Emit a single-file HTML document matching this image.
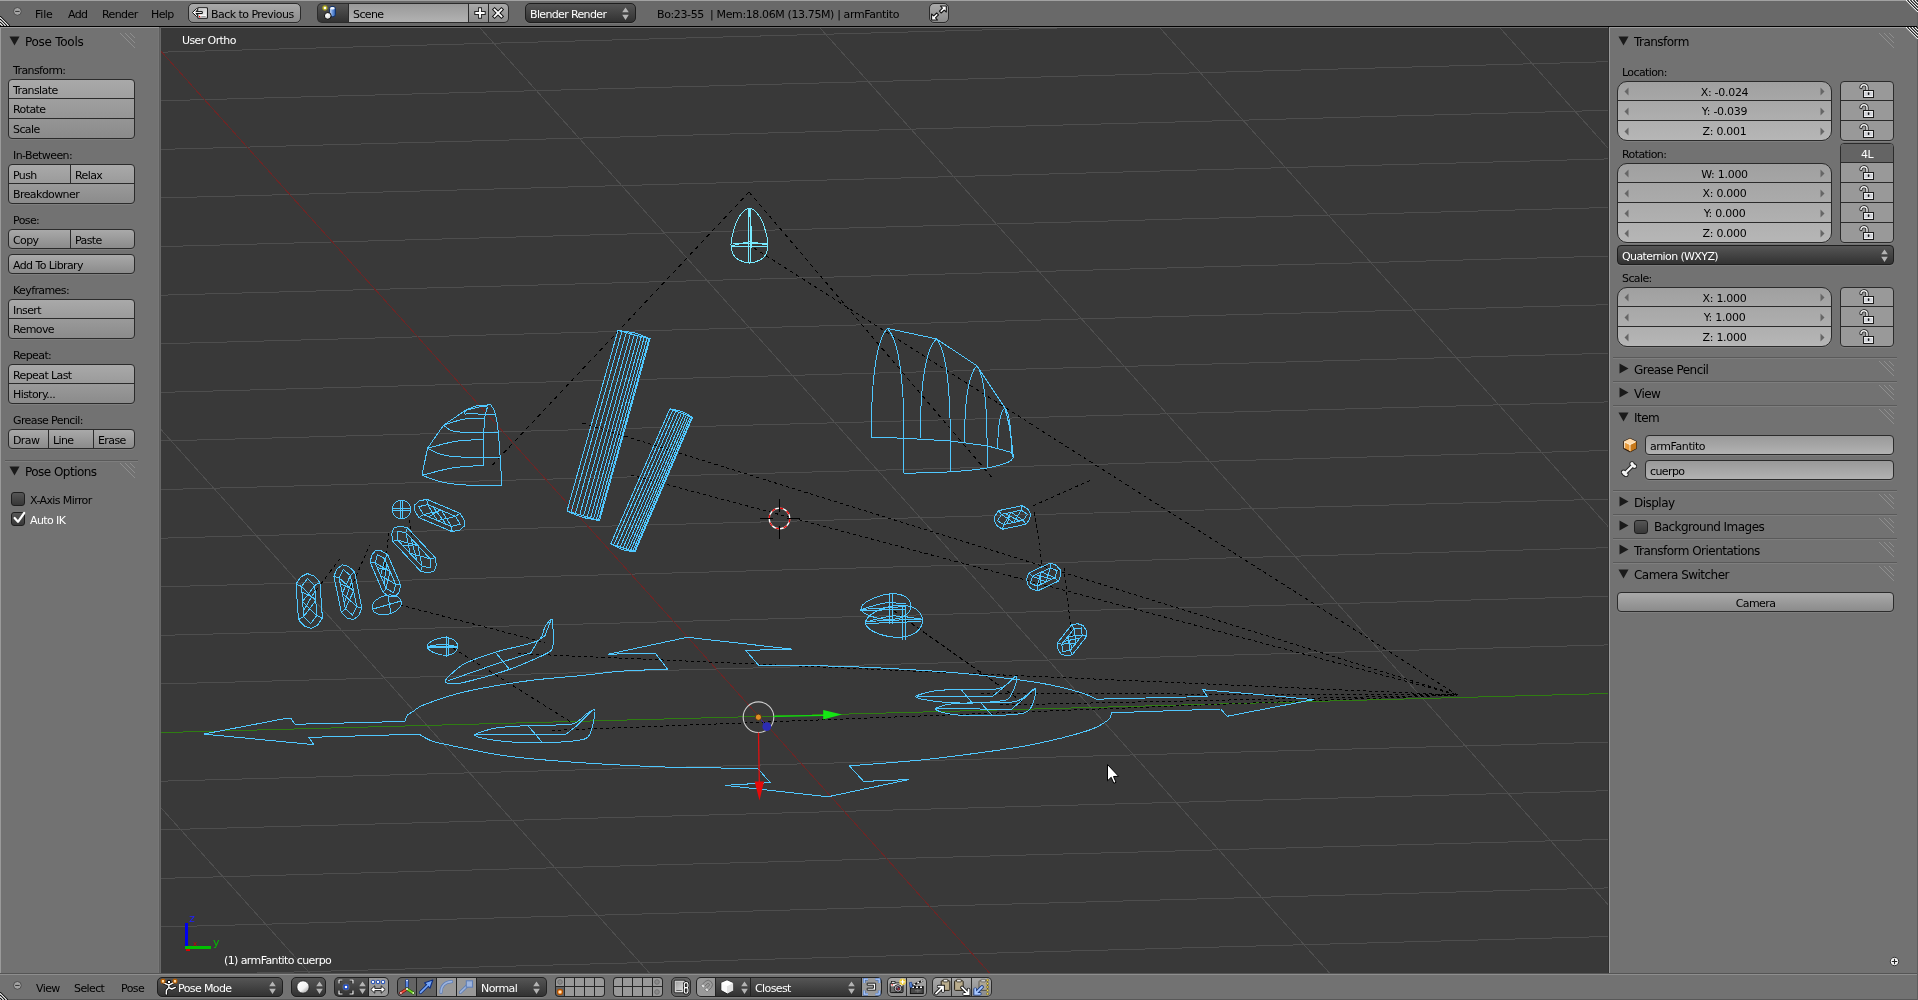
<!DOCTYPE html>
<html><head><meta charset="utf-8"><title>Blender</title>
<style>
html,body{margin:0;padding:0;}
body{width:1918px;height:1000px;position:relative;overflow:hidden;background:#727272;font-family:"DejaVu Sans","Liberation Sans",sans-serif;font-size:11px;line-height:14px;}
body div,body span,body svg{position:absolute;box-sizing:border-box;}
.t{white-space:pre;line-height:14px;will-change:transform;}

.hdr{background:#696969;}
.pan{background:#727272;}
.tool{background:linear-gradient(#a9a9a9,#8b8b8b);border:1px solid #2b2b2b;box-shadow:0 1px 0 rgba(255,255,255,.09);}
.num{background:linear-gradient(#a0a0a0,#b6b6b6);border:1px solid #2b2b2b;box-shadow:0 1px 0 rgba(255,255,255,.09);}
.tog{background:#999;border:1px solid #2b2b2b;box-shadow:0 1px 0 rgba(255,255,255,.09);}
.togsel{background:#646464;border:1px solid #2b2b2b;}
.txtf{background:linear-gradient(#999,#b2b2b2);border:1px solid #2b2b2b;box-shadow:0 1px 0 rgba(255,255,255,.09);}
.menu{background:linear-gradient(#555,#323232);border:1px solid #1e1e1e;box-shadow:0 1px 0 rgba(255,255,255,.09);}
.opt{background:linear-gradient(#555,#373737);border:1px solid #1e1e1e;border-radius:3px;}
.sep{background:#2b2b2b;}
.togc{background:#999;}
.togs{background:#646464;}

</style></head><body>
<div class="hdr" style="left:0px;top:0px;width:1918px;height:27px;"></div>
<div class="" style="left:0px;top:0px;width:1918px;height:1px;background:#a2a2a2;"></div>
<div class="" style="left:0px;top:26px;width:1918px;height:1px;background:#000;"></div>
<div class="pan" style="left:0px;top:27px;width:161px;height:947px;"></div>
<div class="" style="left:0px;top:27px;width:159px;height:1px;background:#9c9c9c;"></div>
<div class="" style="left:0px;top:27px;width:1px;height:947px;background:#9a9a9a;"></div>
<div class="" style="left:158px;top:28px;width:1px;height:946px;background:#777;"></div>
<div class="" style="left:159px;top:27px;width:1px;height:947px;background:#5c5c5c;"></div>
<div class="" style="left:160px;top:27px;width:1px;height:947px;background:#676767;"></div>
<div class="pan" style="left:1608px;top:27px;width:310px;height:947px;"></div>
<div class="" style="left:1608px;top:27px;width:1px;height:947px;background:#303030;"></div>
<div class="" style="left:1609px;top:27px;width:1px;height:947px;background:#9a9a9a;"></div>
<div class="" style="left:1609px;top:27px;width:309px;height:1px;background:#9c9c9c;"></div>
<div class="pan" style="left:0px;top:974px;width:1918px;height:26px;"></div>
<div class="" style="left:0px;top:973px;width:1918px;height:1px;background:#555;"></div>
<div class="" style="left:0px;top:974px;width:1918px;height:1px;background:#8e8e8e;"></div>
<div class="" style="left:0px;top:999px;width:1918px;height:1px;background:#585858;"></div>
<div class="" style="left:1917px;top:13px;width:1px;height:987px;background:#5e5e5e;"></div>
<svg style="left:12px;top:6px" width="10" height="10" viewBox="0 0 10 10"><circle cx="5.4" cy="5.4" r="3.9" fill="#a4a4a4" stroke="#4a4a4a" stroke-width="1"/><rect x="3.2" y="4.9" width="4.4" height="1.1" fill="#3a3a3a"/></svg>
<span class="t" style="left:35px;top:8px;color:#000;letter-spacing:-0.180px;">File</span>
<span class="t" style="left:68px;top:8px;color:#000;letter-spacing:-0.600px;">Add</span>
<span class="t" style="left:102px;top:8px;color:#000;letter-spacing:-0.600px;">Render</span>
<span class="t" style="left:151px;top:8px;color:#000;letter-spacing:-0.600px;">Help</span>
<div class="tool" style="left:188px;top:3px;width:113px;height:20px;border-radius:5px 5px 5px 5px;"></div>
<svg style="left:191px;top:5px" width="18" height="16" viewBox="0 0 18 16"><defs><linearGradient id="gscr" x1="0" y1="0" x2="1" y2="1"><stop offset="0" stop-color="#bdbdbd"/><stop offset="1" stop-color="#f4f4f4"/></linearGradient></defs><rect x="6.8" y="2.7" width="9.6" height="10.6" rx="0.8" fill="#fff" stroke="#111" stroke-width="1.1"/><rect x="8.2" y="4" width="6.8" height="6.3" fill="url(#gscr)"/><rect x="8" y="11" width="1.3" height="1.3" fill="#e00"/><rect x="10.2" y="11.3" width="4.5" height="0.8" fill="#777"/><path d="M1.4 7.5 L5.6 3.6 L6.7 4.8 L4.8 6.6 L11.3 6.6 L11.3 8.5 L4.8 8.5 L6.7 10.3 L5.6 11.5 Z" fill="#fff" stroke="#111" stroke-width="1" stroke-linejoin="round"/></svg>
<span class="t" style="left:211px;top:8px;color:#000;letter-spacing:-0.540px;">Back to Previous</span>
<div class="" style="left:317px;top:3px;width:192px;height:20px;background:#2b2b2b;border-radius:5px 5px 5px 5px;"></div>
<div class="menu" style="left:318px;top:4px;width:30px;height:18px;border:none;box-shadow:none;border-radius:4px 0px 0px 4px;"></div>
<div class="txtf" style="left:349px;top:4px;width:119px;height:18px;border:none;box-shadow:none;"></div>
<div class="tool" style="left:469px;top:4px;width:19px;height:18px;border:none;box-shadow:none;"></div>
<div class="tool" style="left:489px;top:4px;width:19px;height:18px;border:none;box-shadow:none;border-radius:0px 4px 4px 0px;"></div>
<svg style="left:320px;top:4px" width="18" height="16" viewBox="0 0 18 16"><defs><radialGradient id="gy"><stop offset="0.25" stop-color="#fff"/><stop offset="0.45" stop-color="#c8c23a"/><stop offset="0.8" stop-color="#8f8a20" stop-opacity="0.8"/><stop offset="1" stop-color="#8f8a20" stop-opacity="0"/></radialGradient><linearGradient id="gcyl" x1="0" y1="0" x2="1" y2="0"><stop offset="0" stop-color="#e8f0ff"/><stop offset="0.45" stop-color="#6f9be0"/><stop offset="1" stop-color="#2f5fb0"/></linearGradient><radialGradient id="gsp" cx="0.4" cy="0.35" r="0.7"><stop offset="0" stop-color="#fff"/><stop offset="0.7" stop-color="#e0e0e0"/><stop offset="1" stop-color="#8a8a8a"/></radialGradient></defs><circle cx="4.9" cy="3.9" r="3.2" fill="url(#gy)"/><rect x="9.6" y="2.4" width="5.8" height="10.4" rx="2.4" fill="url(#gcyl)" stroke="#0f2f66" stroke-width="1"/><ellipse cx="12.5" cy="4.2" rx="2.2" ry="1.2" fill="#f4f8ff"/><circle cx="7.8" cy="11.9" r="3.4" fill="url(#gsp)" stroke="#0a0a0a" stroke-width="1"/></svg>
<svg style="left:472px;top:5px" width="16" height="16" viewBox="0 0 16 16"><path d="M8 2.3 V13.7 M2.3 8 H13.7" stroke="#222" stroke-width="3.8" stroke-linecap="butt"/><path d="M8 3.3 V12.7 M3.3 8 H12.7" stroke="#fff" stroke-width="1.9" stroke-linecap="butt"/></svg>
<svg style="left:490px;top:5px" width="16" height="16" viewBox="0 0 16 16"><path d="M4.6 4.6 L11.4 11.4 M11.4 4.6 L4.6 11.4" stroke="#111" stroke-width="3.8" stroke-linecap="square"/><path d="M4.6 4.6 L11.4 11.4 M11.4 4.6 L4.6 11.4" stroke="#fff" stroke-width="1.9" stroke-linecap="square"/></svg>
<span class="t" style="left:353px;top:8px;color:#000;letter-spacing:-0.600px;">Scene</span>
<div class="menu" style="left:525px;top:3px;width:111px;height:20px;border-radius:5px 5px 5px 5px;"></div>
<span class="t" style="left:530px;top:8px;color:#fff;letter-spacing:-0.642px;">Blender Render</span>
<span class="t" style="left:657px;top:8px;color:#000;letter-spacing:-0.382px;">Bo:23-55  | Mem:18.06M (13.75M) | armFantito</span>
<div class="tool" style="left:929px;top:3px;width:20px;height:20px;border-radius:5px 5px 5px 5px;"></div>
<svg style="left:930px;top:4px" width="18" height="18" viewBox="0 0 18 18"><path d="M16.3 2 L16.3 8 L14.2 6.1 L11.2 9 L9.4 7.2 L12.4 4.2 L10.4 2 Z" fill="#fff" stroke="#111" stroke-width="1.1" stroke-linejoin="round"/><path d="M1.6 16 L1.6 10 L3.7 11.9 L6.7 9 L8.5 10.8 L5.5 13.8 L7.5 16 Z" fill="#fff" stroke="#111" stroke-width="1.1" stroke-linejoin="round"/></svg>
<svg style="left:622.3px;top:6.5px" width="7" height="14" viewBox="0 0 7 14"><path d="M3.5 0.4 L6.8 5.3 L0.2 5.3 Z M3.5 12.9 L6.8 7.8 L0.2 7.8 Z" fill="#b4b4b4"/></svg>
<svg style="left:9px;top:36px" width="11" height="10" viewBox="0 0 11 10"><path d="M0.5 0.5 L10.5 0.5 L5.5 9.5 Z" fill="#1a1a1a"/></svg>
<span class="t" style="left:25px;top:35px;color:#000;letter-spacing:-0.267px;font-size:12px;">Pose Tools</span>
<svg style="left:119px;top:32px" width="18" height="18" viewBox="0 0 18 18"><path d="M1 1 L16 16 M6 1 L16 11 M11 1 L16 6" stroke="#8e8e8e" stroke-width="1" fill="none"/></svg>
<span class="t" style="left:13px;top:64px;color:#000;letter-spacing:-0.600px;">Transform:</span>
<div class="tool" style="left:8px;top:79px;width:127px;height:60px;border-radius:4px 4px 4px 4px;"></div>
<span class="t" style="left:13px;top:84px;color:#000;letter-spacing:-0.600px;">Translate</span>
<div class="sep" style="left:9px;top:98px;width:125px;height:1px;"></div>
<span class="t" style="left:13px;top:103px;color:#000;letter-spacing:-0.600px;">Rotate</span>
<div class="sep" style="left:9px;top:118px;width:125px;height:1px;"></div>
<span class="t" style="left:13px;top:123px;color:#000;letter-spacing:-0.600px;">Scale</span>
<span class="t" style="left:13px;top:149px;color:#000;letter-spacing:-0.600px;">In-Between:</span>
<div class="tool" style="left:8px;top:164px;width:127px;height:40px;border-radius:4px 4px 4px 4px;"></div>
<span class="t" style="left:13px;top:169px;color:#000;letter-spacing:-0.600px;">Push</span>
<div class="sep" style="left:70px;top:165px;width:1px;height:19px;"></div>
<span class="t" style="left:75px;top:169px;color:#000;letter-spacing:-0.600px;">Relax</span>
<div class="sep" style="left:9px;top:183px;width:125px;height:1px;"></div>
<span class="t" style="left:13px;top:188px;color:#000;letter-spacing:-0.600px;">Breakdowner</span>
<span class="t" style="left:13px;top:214px;color:#000;letter-spacing:-0.600px;">Pose:</span>
<div class="tool" style="left:8px;top:229px;width:127px;height:20px;border-radius:4px 4px 4px 4px;"></div>
<span class="t" style="left:13px;top:234px;color:#000;letter-spacing:-0.600px;">Copy</span>
<div class="sep" style="left:70px;top:230px;width:1px;height:18px;"></div>
<span class="t" style="left:75px;top:234px;color:#000;letter-spacing:-0.600px;">Paste</span>
<div class="tool" style="left:8px;top:254px;width:127px;height:20px;border-radius:4px 4px 4px 4px;"></div>
<span class="t" style="left:13px;top:259px;color:#000;letter-spacing:-0.600px;">Add To Library</span>
<span class="t" style="left:13px;top:284px;color:#000;letter-spacing:-0.600px;">Keyframes:</span>
<div class="tool" style="left:8px;top:299px;width:127px;height:40px;border-radius:4px 4px 4px 4px;"></div>
<span class="t" style="left:13px;top:304px;color:#000;letter-spacing:-0.600px;">Insert</span>
<div class="sep" style="left:9px;top:318px;width:125px;height:1px;"></div>
<span class="t" style="left:13px;top:323px;color:#000;letter-spacing:-0.600px;">Remove</span>
<span class="t" style="left:13px;top:349px;color:#000;letter-spacing:-0.600px;">Repeat:</span>
<div class="tool" style="left:8px;top:364px;width:127px;height:40px;border-radius:4px 4px 4px 4px;"></div>
<span class="t" style="left:13px;top:369px;color:#000;letter-spacing:-0.600px;">Repeat Last</span>
<div class="sep" style="left:9px;top:383px;width:125px;height:1px;"></div>
<span class="t" style="left:13px;top:388px;color:#000;letter-spacing:-0.600px;">History...</span>
<span class="t" style="left:13px;top:414px;color:#000;letter-spacing:-0.600px;">Grease Pencil:</span>
<div class="tool" style="left:8px;top:429px;width:127px;height:20px;border-radius:4px 4px 4px 4px;"></div>
<span class="t" style="left:13px;top:434px;color:#000;letter-spacing:-0.600px;">Draw</span>
<div class="sep" style="left:48px;top:430px;width:1px;height:18px;"></div>
<span class="t" style="left:53px;top:434px;color:#000;letter-spacing:-0.600px;">Line</span>
<div class="sep" style="left:93px;top:430px;width:1px;height:18px;"></div>
<span class="t" style="left:98px;top:434px;color:#000;letter-spacing:-0.600px;">Erase</span>
<div class="" style="left:5px;top:460px;width:133px;height:1px;background:#5a5a5a;"></div>
<div class="" style="left:5px;top:461px;width:133px;height:1px;background:#7e7e7e;"></div>
<svg style="left:9px;top:466px" width="11" height="10" viewBox="0 0 11 10"><path d="M0.5 0.5 L10.5 0.5 L5.5 9.5 Z" fill="#1a1a1a"/></svg>
<span class="t" style="left:25px;top:465px;color:#000;letter-spacing:-0.530px;font-size:12px;">Pose Options</span>
<svg style="left:119px;top:462px" width="18" height="18" viewBox="0 0 18 18"><path d="M1 1 L16 16 M6 1 L16 11 M11 1 L16 6" stroke="#8e8e8e" stroke-width="1" fill="none"/></svg>
<div class="opt" style="left:11px;top:492px;width:14px;height:14px;"></div>
<span class="t" style="left:30px;top:494px;color:#000;letter-spacing:-0.600px;">X-Axis Mirror</span>
<div class="opt" style="left:11px;top:512px;width:14px;height:14px;"></div>
<svg style="left:11px;top:509px" width="18" height="18" viewBox="0 0 18 18"><path d="M3.6 9 L7 12.8 L13.2 4" stroke="#fff" stroke-width="2.2" fill="none" stroke-linecap="round" stroke-linejoin="round"/></svg>
<span class="t" style="left:30px;top:514px;color:#fff;letter-spacing:-0.600px;">Auto IK</span>
<svg style="left:1618px;top:36px" width="11" height="10" viewBox="0 0 11 10"><path d="M0.5 0.5 L10.5 0.5 L5.5 9.5 Z" fill="#1a1a1a"/></svg>
<span class="t" style="left:1634px;top:35px;color:#000;letter-spacing:-0.530px;font-size:12px;">Transform</span>
<svg style="left:1878px;top:32px" width="18" height="18" viewBox="0 0 18 18"><path d="M1 1 L16 16 M6 1 L16 11 M11 1 L16 6" stroke="#8e8e8e" stroke-width="1" fill="none"/></svg>
<span class="t" style="left:1622px;top:66px;color:#000;letter-spacing:-0.600px;">Location:</span>
<div class="num" style="left:1617px;top:81px;width:215px;height:60px;border-radius:10px 10px 10px 10px;"></div>
<span class="t" style="left:1616.5px;top:86px;color:#000;letter-spacing:-0.280px;width:215px;text-align:center;">X: -0.024</span>
<svg style="left:1624px;top:87px" width="5" height="9" viewBox="0 0 5 9"><path d="M4.5 0.5 L0.5 4.5 L4.5 8.5 Z" fill="#666"/></svg>
<svg style="left:1820px;top:87px" width="5" height="9" viewBox="0 0 5 9"><path d="M0.5 0.5 L4.5 4.5 L0.5 8.5 Z" fill="#666"/></svg>
<div class="sep" style="left:1618px;top:100px;width:213px;height:1px;"></div>
<span class="t" style="left:1616.5px;top:105px;color:#000;letter-spacing:-0.280px;width:215px;text-align:center;">Y: -0.039</span>
<svg style="left:1624px;top:107px" width="5" height="9" viewBox="0 0 5 9"><path d="M4.5 0.5 L0.5 4.5 L4.5 8.5 Z" fill="#666"/></svg>
<svg style="left:1820px;top:107px" width="5" height="9" viewBox="0 0 5 9"><path d="M0.5 0.5 L4.5 4.5 L0.5 8.5 Z" fill="#666"/></svg>
<div class="sep" style="left:1618px;top:120px;width:213px;height:1px;"></div>
<span class="t" style="left:1616.5px;top:125px;color:#000;letter-spacing:-0.280px;width:215px;text-align:center;">Z: 0.001</span>
<svg style="left:1624px;top:127px" width="5" height="9" viewBox="0 0 5 9"><path d="M4.5 0.5 L0.5 4.5 L4.5 8.5 Z" fill="#666"/></svg>
<svg style="left:1820px;top:127px" width="5" height="9" viewBox="0 0 5 9"><path d="M0.5 0.5 L4.5 4.5 L0.5 8.5 Z" fill="#666"/></svg>
<div class="tog" style="left:1840px;top:81px;width:54px;height:60px;border-radius:4px 4px 4px 4px;"></div>
<svg style="left:1859px;top:82px" width="16" height="16" viewBox="0 0 16 16"><path d="M2 5.6 C1.6 2.2 8 1.6 8 5.2 L8 9" stroke="#1c1c1c" stroke-width="3.2" fill="none" stroke-linecap="round"/><path d="M2 5.6 C1.6 2.2 8 1.6 8 5.2 L8 9" stroke="#f0f0f0" stroke-width="1.5" fill="none" stroke-linecap="round"/><rect x="4.5" y="8.5" width="10" height="7" fill="#f1f1f1" stroke="#1c1c1c" stroke-width="1"/><rect x="5.5" y="10.5" width="8" height="1" fill="#b4b8c4"/><rect x="5.5" y="12.5" width="8" height="1" fill="#b4b8c4"/><rect x="8.8" y="10.3" width="1.6" height="2.6" rx="0.7" fill="#111"/></svg>
<div class="sep" style="left:1841px;top:100px;width:52px;height:1px;"></div>
<svg style="left:1859px;top:102px" width="16" height="16" viewBox="0 0 16 16"><path d="M2 5.6 C1.6 2.2 8 1.6 8 5.2 L8 9" stroke="#1c1c1c" stroke-width="3.2" fill="none" stroke-linecap="round"/><path d="M2 5.6 C1.6 2.2 8 1.6 8 5.2 L8 9" stroke="#f0f0f0" stroke-width="1.5" fill="none" stroke-linecap="round"/><rect x="4.5" y="8.5" width="10" height="7" fill="#f1f1f1" stroke="#1c1c1c" stroke-width="1"/><rect x="5.5" y="10.5" width="8" height="1" fill="#b4b8c4"/><rect x="5.5" y="12.5" width="8" height="1" fill="#b4b8c4"/><rect x="8.8" y="10.3" width="1.6" height="2.6" rx="0.7" fill="#111"/></svg>
<div class="sep" style="left:1841px;top:120px;width:52px;height:1px;"></div>
<svg style="left:1859px;top:122px" width="16" height="16" viewBox="0 0 16 16"><path d="M2 5.6 C1.6 2.2 8 1.6 8 5.2 L8 9" stroke="#1c1c1c" stroke-width="3.2" fill="none" stroke-linecap="round"/><path d="M2 5.6 C1.6 2.2 8 1.6 8 5.2 L8 9" stroke="#f0f0f0" stroke-width="1.5" fill="none" stroke-linecap="round"/><rect x="4.5" y="8.5" width="10" height="7" fill="#f1f1f1" stroke="#1c1c1c" stroke-width="1"/><rect x="5.5" y="10.5" width="8" height="1" fill="#b4b8c4"/><rect x="5.5" y="12.5" width="8" height="1" fill="#b4b8c4"/><rect x="8.8" y="10.3" width="1.6" height="2.6" rx="0.7" fill="#111"/></svg>
<span class="t" style="left:1622px;top:148px;color:#000;letter-spacing:-0.600px;">Rotation:</span>
<div class="num" style="left:1617px;top:163px;width:215px;height:80px;border-radius:10px 10px 10px 10px;"></div>
<span class="t" style="left:1616.5px;top:168px;color:#000;letter-spacing:-0.280px;width:215px;text-align:center;">W: 1.000</span>
<svg style="left:1624px;top:169px" width="5" height="9" viewBox="0 0 5 9"><path d="M4.5 0.5 L0.5 4.5 L4.5 8.5 Z" fill="#666"/></svg>
<svg style="left:1820px;top:169px" width="5" height="9" viewBox="0 0 5 9"><path d="M0.5 0.5 L4.5 4.5 L0.5 8.5 Z" fill="#666"/></svg>
<div class="sep" style="left:1618px;top:182px;width:213px;height:1px;"></div>
<span class="t" style="left:1616.5px;top:187px;color:#000;letter-spacing:-0.280px;width:215px;text-align:center;">X: 0.000</span>
<svg style="left:1624px;top:189px" width="5" height="9" viewBox="0 0 5 9"><path d="M4.5 0.5 L0.5 4.5 L4.5 8.5 Z" fill="#666"/></svg>
<svg style="left:1820px;top:189px" width="5" height="9" viewBox="0 0 5 9"><path d="M0.5 0.5 L4.5 4.5 L0.5 8.5 Z" fill="#666"/></svg>
<div class="sep" style="left:1618px;top:202px;width:213px;height:1px;"></div>
<span class="t" style="left:1616.5px;top:207px;color:#000;letter-spacing:-0.280px;width:215px;text-align:center;">Y: 0.000</span>
<svg style="left:1624px;top:209px" width="5" height="9" viewBox="0 0 5 9"><path d="M4.5 0.5 L0.5 4.5 L4.5 8.5 Z" fill="#666"/></svg>
<svg style="left:1820px;top:209px" width="5" height="9" viewBox="0 0 5 9"><path d="M0.5 0.5 L4.5 4.5 L0.5 8.5 Z" fill="#666"/></svg>
<div class="sep" style="left:1618px;top:222px;width:213px;height:1px;"></div>
<span class="t" style="left:1616.5px;top:227px;color:#000;letter-spacing:-0.280px;width:215px;text-align:center;">Z: 0.000</span>
<svg style="left:1624px;top:229px" width="5" height="9" viewBox="0 0 5 9"><path d="M4.5 0.5 L0.5 4.5 L4.5 8.5 Z" fill="#666"/></svg>
<svg style="left:1820px;top:229px" width="5" height="9" viewBox="0 0 5 9"><path d="M0.5 0.5 L4.5 4.5 L0.5 8.5 Z" fill="#666"/></svg>
<div class="tog" style="left:1840px;top:143px;width:54px;height:100px;border-radius:4px 4px 4px 4px;"></div>
<div class="" style="left:1841px;top:144px;width:52px;height:18px;background:#646464;border-radius:3px 3px 0px 0px;"></div>
<span class="t" style="left:1840px;top:148px;color:#fff;letter-spacing:-0.600px;width:54px;text-align:center;">4L</span>
<div class="sep" style="left:1841px;top:162px;width:52px;height:1px;"></div>
<svg style="left:1859px;top:164px" width="16" height="16" viewBox="0 0 16 16"><path d="M2 5.6 C1.6 2.2 8 1.6 8 5.2 L8 9" stroke="#1c1c1c" stroke-width="3.2" fill="none" stroke-linecap="round"/><path d="M2 5.6 C1.6 2.2 8 1.6 8 5.2 L8 9" stroke="#f0f0f0" stroke-width="1.5" fill="none" stroke-linecap="round"/><rect x="4.5" y="8.5" width="10" height="7" fill="#f1f1f1" stroke="#1c1c1c" stroke-width="1"/><rect x="5.5" y="10.5" width="8" height="1" fill="#b4b8c4"/><rect x="5.5" y="12.5" width="8" height="1" fill="#b4b8c4"/><rect x="8.8" y="10.3" width="1.6" height="2.6" rx="0.7" fill="#111"/></svg>
<div class="sep" style="left:1841px;top:182px;width:52px;height:1px;"></div>
<svg style="left:1859px;top:184px" width="16" height="16" viewBox="0 0 16 16"><path d="M2 5.6 C1.6 2.2 8 1.6 8 5.2 L8 9" stroke="#1c1c1c" stroke-width="3.2" fill="none" stroke-linecap="round"/><path d="M2 5.6 C1.6 2.2 8 1.6 8 5.2 L8 9" stroke="#f0f0f0" stroke-width="1.5" fill="none" stroke-linecap="round"/><rect x="4.5" y="8.5" width="10" height="7" fill="#f1f1f1" stroke="#1c1c1c" stroke-width="1"/><rect x="5.5" y="10.5" width="8" height="1" fill="#b4b8c4"/><rect x="5.5" y="12.5" width="8" height="1" fill="#b4b8c4"/><rect x="8.8" y="10.3" width="1.6" height="2.6" rx="0.7" fill="#111"/></svg>
<div class="sep" style="left:1841px;top:202px;width:52px;height:1px;"></div>
<svg style="left:1859px;top:204px" width="16" height="16" viewBox="0 0 16 16"><path d="M2 5.6 C1.6 2.2 8 1.6 8 5.2 L8 9" stroke="#1c1c1c" stroke-width="3.2" fill="none" stroke-linecap="round"/><path d="M2 5.6 C1.6 2.2 8 1.6 8 5.2 L8 9" stroke="#f0f0f0" stroke-width="1.5" fill="none" stroke-linecap="round"/><rect x="4.5" y="8.5" width="10" height="7" fill="#f1f1f1" stroke="#1c1c1c" stroke-width="1"/><rect x="5.5" y="10.5" width="8" height="1" fill="#b4b8c4"/><rect x="5.5" y="12.5" width="8" height="1" fill="#b4b8c4"/><rect x="8.8" y="10.3" width="1.6" height="2.6" rx="0.7" fill="#111"/></svg>
<div class="sep" style="left:1841px;top:222px;width:52px;height:1px;"></div>
<svg style="left:1859px;top:224px" width="16" height="16" viewBox="0 0 16 16"><path d="M2 5.6 C1.6 2.2 8 1.6 8 5.2 L8 9" stroke="#1c1c1c" stroke-width="3.2" fill="none" stroke-linecap="round"/><path d="M2 5.6 C1.6 2.2 8 1.6 8 5.2 L8 9" stroke="#f0f0f0" stroke-width="1.5" fill="none" stroke-linecap="round"/><rect x="4.5" y="8.5" width="10" height="7" fill="#f1f1f1" stroke="#1c1c1c" stroke-width="1"/><rect x="5.5" y="10.5" width="8" height="1" fill="#b4b8c4"/><rect x="5.5" y="12.5" width="8" height="1" fill="#b4b8c4"/><rect x="8.8" y="10.3" width="1.6" height="2.6" rx="0.7" fill="#111"/></svg>
<div class="menu" style="left:1617px;top:245px;width:277px;height:20px;border-radius:4px 4px 4px 4px;"></div>
<span class="t" style="left:1622px;top:250px;color:#fff;letter-spacing:-0.600px;">Quaternion (WXYZ)</span>
<svg style="left:1880.5px;top:248.5px" width="7" height="14" viewBox="0 0 7 14"><path d="M3.5 0.4 L6.8 5.3 L0.2 5.3 Z M3.5 12.9 L6.8 7.8 L0.2 7.8 Z" fill="#b4b4b4"/></svg>
<span class="t" style="left:1622px;top:272px;color:#000;letter-spacing:-0.600px;">Scale:</span>
<div class="num" style="left:1617px;top:287px;width:215px;height:60px;border-radius:10px 10px 10px 10px;"></div>
<span class="t" style="left:1616.5px;top:292px;color:#000;letter-spacing:-0.280px;width:215px;text-align:center;">X: 1.000</span>
<svg style="left:1624px;top:293px" width="5" height="9" viewBox="0 0 5 9"><path d="M4.5 0.5 L0.5 4.5 L4.5 8.5 Z" fill="#666"/></svg>
<svg style="left:1820px;top:293px" width="5" height="9" viewBox="0 0 5 9"><path d="M0.5 0.5 L4.5 4.5 L0.5 8.5 Z" fill="#666"/></svg>
<div class="sep" style="left:1618px;top:306px;width:213px;height:1px;"></div>
<span class="t" style="left:1616.5px;top:311px;color:#000;letter-spacing:-0.280px;width:215px;text-align:center;">Y: 1.000</span>
<svg style="left:1624px;top:313px" width="5" height="9" viewBox="0 0 5 9"><path d="M4.5 0.5 L0.5 4.5 L4.5 8.5 Z" fill="#666"/></svg>
<svg style="left:1820px;top:313px" width="5" height="9" viewBox="0 0 5 9"><path d="M0.5 0.5 L4.5 4.5 L0.5 8.5 Z" fill="#666"/></svg>
<div class="sep" style="left:1618px;top:326px;width:213px;height:1px;"></div>
<span class="t" style="left:1616.5px;top:331px;color:#000;letter-spacing:-0.280px;width:215px;text-align:center;">Z: 1.000</span>
<svg style="left:1624px;top:333px" width="5" height="9" viewBox="0 0 5 9"><path d="M4.5 0.5 L0.5 4.5 L4.5 8.5 Z" fill="#666"/></svg>
<svg style="left:1820px;top:333px" width="5" height="9" viewBox="0 0 5 9"><path d="M0.5 0.5 L4.5 4.5 L0.5 8.5 Z" fill="#666"/></svg>
<div class="tog" style="left:1840px;top:287px;width:54px;height:60px;border-radius:4px 4px 4px 4px;"></div>
<svg style="left:1859px;top:288px" width="16" height="16" viewBox="0 0 16 16"><path d="M2 5.6 C1.6 2.2 8 1.6 8 5.2 L8 9" stroke="#1c1c1c" stroke-width="3.2" fill="none" stroke-linecap="round"/><path d="M2 5.6 C1.6 2.2 8 1.6 8 5.2 L8 9" stroke="#f0f0f0" stroke-width="1.5" fill="none" stroke-linecap="round"/><rect x="4.5" y="8.5" width="10" height="7" fill="#f1f1f1" stroke="#1c1c1c" stroke-width="1"/><rect x="5.5" y="10.5" width="8" height="1" fill="#b4b8c4"/><rect x="5.5" y="12.5" width="8" height="1" fill="#b4b8c4"/><rect x="8.8" y="10.3" width="1.6" height="2.6" rx="0.7" fill="#111"/></svg>
<div class="sep" style="left:1841px;top:306px;width:52px;height:1px;"></div>
<svg style="left:1859px;top:308px" width="16" height="16" viewBox="0 0 16 16"><path d="M2 5.6 C1.6 2.2 8 1.6 8 5.2 L8 9" stroke="#1c1c1c" stroke-width="3.2" fill="none" stroke-linecap="round"/><path d="M2 5.6 C1.6 2.2 8 1.6 8 5.2 L8 9" stroke="#f0f0f0" stroke-width="1.5" fill="none" stroke-linecap="round"/><rect x="4.5" y="8.5" width="10" height="7" fill="#f1f1f1" stroke="#1c1c1c" stroke-width="1"/><rect x="5.5" y="10.5" width="8" height="1" fill="#b4b8c4"/><rect x="5.5" y="12.5" width="8" height="1" fill="#b4b8c4"/><rect x="8.8" y="10.3" width="1.6" height="2.6" rx="0.7" fill="#111"/></svg>
<div class="sep" style="left:1841px;top:326px;width:52px;height:1px;"></div>
<svg style="left:1859px;top:328px" width="16" height="16" viewBox="0 0 16 16"><path d="M2 5.6 C1.6 2.2 8 1.6 8 5.2 L8 9" stroke="#1c1c1c" stroke-width="3.2" fill="none" stroke-linecap="round"/><path d="M2 5.6 C1.6 2.2 8 1.6 8 5.2 L8 9" stroke="#f0f0f0" stroke-width="1.5" fill="none" stroke-linecap="round"/><rect x="4.5" y="8.5" width="10" height="7" fill="#f1f1f1" stroke="#1c1c1c" stroke-width="1"/><rect x="5.5" y="10.5" width="8" height="1" fill="#b4b8c4"/><rect x="5.5" y="12.5" width="8" height="1" fill="#b4b8c4"/><rect x="8.8" y="10.3" width="1.6" height="2.6" rx="0.7" fill="#111"/></svg>
<div class="" style="left:1613px;top:357px;width:284px;height:1px;background:#5a5a5a;"></div>
<div class="" style="left:1613px;top:358px;width:284px;height:1px;background:#7e7e7e;"></div>
<svg style="left:1619px;top:363px" width="10" height="11" viewBox="0 0 10 11"><path d="M0.5 0.5 L9.5 5.5 L0.5 10.5 Z" fill="#1a1a1a"/></svg>
<span class="t" style="left:1634px;top:363px;color:#000;letter-spacing:-0.530px;font-size:12px;">Grease Pencil</span>
<svg style="left:1878px;top:360px" width="18" height="18" viewBox="0 0 18 18"><path d="M1 1 L16 16 M6 1 L16 11 M11 1 L16 6" stroke="#8e8e8e" stroke-width="1" fill="none"/></svg>
<div class="" style="left:1613px;top:381px;width:284px;height:1px;background:#5a5a5a;"></div>
<div class="" style="left:1613px;top:382px;width:284px;height:1px;background:#7e7e7e;"></div>
<svg style="left:1619px;top:387px" width="10" height="11" viewBox="0 0 10 11"><path d="M0.5 0.5 L9.5 5.5 L0.5 10.5 Z" fill="#1a1a1a"/></svg>
<span class="t" style="left:1634px;top:387px;color:#000;letter-spacing:-0.530px;font-size:12px;">View</span>
<svg style="left:1878px;top:384px" width="18" height="18" viewBox="0 0 18 18"><path d="M1 1 L16 16 M6 1 L16 11 M11 1 L16 6" stroke="#8e8e8e" stroke-width="1" fill="none"/></svg>
<div class="" style="left:1613px;top:405px;width:284px;height:1px;background:#5a5a5a;"></div>
<div class="" style="left:1613px;top:406px;width:284px;height:1px;background:#7e7e7e;"></div>
<svg style="left:1618px;top:412px" width="11" height="10" viewBox="0 0 11 10"><path d="M0.5 0.5 L10.5 0.5 L5.5 9.5 Z" fill="#1a1a1a"/></svg>
<span class="t" style="left:1634px;top:411px;color:#000;letter-spacing:-0.530px;font-size:12px;">Item</span>
<svg style="left:1878px;top:408px" width="18" height="18" viewBox="0 0 18 18"><path d="M1 1 L16 16 M6 1 L16 11 M11 1 L16 6" stroke="#8e8e8e" stroke-width="1" fill="none"/></svg>
<div class="txtf" style="left:1645px;top:435px;width:249px;height:20px;border-radius:4px 4px 4px 4px;"></div>
<svg style="left:1621.5px;top:437px" width="16" height="16" viewBox="0 0 16 16"><path d="M8 1.4 L14.2 4.4 L14.2 11.6 L8 14.8 L1.8 11.6 L1.8 4.4 Z" fill="#e89a3c" stroke="#2a1808" stroke-width="1.1" stroke-linejoin="round"/><path d="M8 7.6 L14.2 4.4 L14.2 11.6 L8 14.8 Z" fill="#c87818"/><path d="M8 1.4 L14.2 4.4 L8 7.6 L1.8 4.4 Z" fill="#ffd9a8"/><path d="M2.4 4.8 L8 7.6 L13.6 4.8 M8 7.6 V14.2 M2.6 5 V11.2" stroke="#fff4e0" stroke-width="0.9" fill="none"/></svg>
<svg style="left:1621.3px;top:461.3px" width="16" height="16" viewBox="0 0 16 16"><g stroke-linecap="round"><path d="M3.2 13 L12.2 4" stroke="#222" stroke-width="4.2"/><circle cx="2.6" cy="11.2" r="2.6" fill="#222"/><circle cx="5" cy="13.6" r="2.6" fill="#222"/><circle cx="11" cy="2.8" r="2.6" fill="#222"/><circle cx="13.4" cy="5.2" r="2.6" fill="#222"/><path d="M3.2 13 L12.2 4" stroke="#f4f4f4" stroke-width="2.4"/><circle cx="2.6" cy="11.2" r="1.7" fill="#f4f4f4"/><circle cx="5" cy="13.6" r="1.7" fill="#f4f4f4"/><circle cx="11" cy="2.8" r="1.7" fill="#f4f4f4"/><circle cx="13.4" cy="5.2" r="1.7" fill="#f4f4f4"/></g></svg>
<span class="t" style="left:1650px;top:440px;color:#000;letter-spacing:-0.403px;">armFantito</span>
<div class="txtf" style="left:1645px;top:460px;width:249px;height:20px;border-radius:4px 4px 4px 4px;"></div>
<span class="t" style="left:1650px;top:465px;color:#000;letter-spacing:-0.600px;">cuerpo</span>
<div class="" style="left:1613px;top:490px;width:284px;height:1px;background:#5a5a5a;"></div>
<div class="" style="left:1613px;top:491px;width:284px;height:1px;background:#7e7e7e;"></div>
<svg style="left:1619px;top:496px" width="10" height="11" viewBox="0 0 10 11"><path d="M0.5 0.5 L9.5 5.5 L0.5 10.5 Z" fill="#1a1a1a"/></svg>
<span class="t" style="left:1634px;top:496px;color:#000;letter-spacing:-0.530px;font-size:12px;">Display</span>
<svg style="left:1878px;top:493px" width="18" height="18" viewBox="0 0 18 18"><path d="M1 1 L16 16 M6 1 L16 11 M11 1 L16 6" stroke="#8e8e8e" stroke-width="1" fill="none"/></svg>
<div class="" style="left:1613px;top:514px;width:284px;height:1px;background:#5a5a5a;"></div>
<div class="" style="left:1613px;top:515px;width:284px;height:1px;background:#7e7e7e;"></div>
<svg style="left:1619px;top:520px" width="10" height="11" viewBox="0 0 10 11"><path d="M0.5 0.5 L9.5 5.5 L0.5 10.5 Z" fill="#1a1a1a"/></svg>
<div class="opt" style="left:1634px;top:520px;width:14px;height:14px;"></div>
<span class="t" style="left:1654px;top:520px;color:#000;letter-spacing:-0.530px;font-size:12px;">Background Images</span>
<svg style="left:1878px;top:517px" width="18" height="18" viewBox="0 0 18 18"><path d="M1 1 L16 16 M6 1 L16 11 M11 1 L16 6" stroke="#8e8e8e" stroke-width="1" fill="none"/></svg>
<div class="" style="left:1613px;top:538px;width:284px;height:1px;background:#5a5a5a;"></div>
<div class="" style="left:1613px;top:539px;width:284px;height:1px;background:#7e7e7e;"></div>
<svg style="left:1619px;top:544px" width="10" height="11" viewBox="0 0 10 11"><path d="M0.5 0.5 L9.5 5.5 L0.5 10.5 Z" fill="#1a1a1a"/></svg>
<span class="t" style="left:1634px;top:544px;color:#000;letter-spacing:-0.530px;font-size:12px;">Transform Orientations</span>
<svg style="left:1878px;top:541px" width="18" height="18" viewBox="0 0 18 18"><path d="M1 1 L16 16 M6 1 L16 11 M11 1 L16 6" stroke="#8e8e8e" stroke-width="1" fill="none"/></svg>
<div class="" style="left:1613px;top:562px;width:284px;height:1px;background:#5a5a5a;"></div>
<div class="" style="left:1613px;top:563px;width:284px;height:1px;background:#7e7e7e;"></div>
<svg style="left:1618px;top:569px" width="11" height="10" viewBox="0 0 11 10"><path d="M0.5 0.5 L10.5 0.5 L5.5 9.5 Z" fill="#1a1a1a"/></svg>
<span class="t" style="left:1634px;top:568px;color:#000;letter-spacing:-0.530px;font-size:12px;">Camera Switcher</span>
<svg style="left:1878px;top:565px" width="18" height="18" viewBox="0 0 18 18"><path d="M1 1 L16 16 M6 1 L16 11 M11 1 L16 6" stroke="#8e8e8e" stroke-width="1" fill="none"/></svg>
<div class="tool" style="left:1617px;top:592px;width:277px;height:20px;border-radius:4px 4px 4px 4px;"></div>
<span class="t" style="left:1617px;top:597px;color:#000;letter-spacing:-0.600px;width:277px;text-align:center;">Camera</span>
<svg style="left:12px;top:980px" width="10" height="10" viewBox="0 0 10 10"><circle cx="5.4" cy="5.4" r="3.9" fill="#a4a4a4" stroke="#4a4a4a" stroke-width="1"/><rect x="3.2" y="4.9" width="4.4" height="1.1" fill="#3a3a3a"/></svg>
<span class="t" style="left:36px;top:982px;color:#000;letter-spacing:-0.600px;">View</span>
<span class="t" style="left:74px;top:982px;color:#000;letter-spacing:-0.600px;">Select</span>
<span class="t" style="left:121px;top:982px;color:#000;letter-spacing:-0.600px;">Pose</span>
<div class="menu" style="left:157px;top:977px;width:126px;height:20px;border-radius:5px 5px 5px 5px;"></div>
<svg style="left:160px;top:978px" width="18" height="18" viewBox="0 0 18 18"><path d="M3.2 4.6 L8.8 7.2 L14.6 4.2 M8.9 7 L8.8 9.6 L6.4 12.2 L6.3 16 M8.8 9.6 L11.8 11 L15.3 9.4" stroke="#111" stroke-width="3" fill="none" stroke-linecap="round" stroke-linejoin="round"/><circle cx="9" cy="4" r="2.3" fill="#111"/><path d="M3.2 4.6 L8.8 7.2 L14.6 4.2 M8.9 7 L8.8 9.6 L6.4 12.2 L6.3 16 M8.8 9.6 L11.8 11 L15.3 9.4" stroke="#fff" stroke-width="1.4" fill="none" stroke-linecap="round" stroke-linejoin="round"/><rect x="8" y="3" width="2" height="2" fill="#fff"/><rect x="1.2" y="1.4" width="3.6" height="3.6" rx="1" fill="#ffd9a0" stroke="#b55c00" stroke-width="1.2"/><rect x="13.2" y="1.4" width="3.6" height="3.6" rx="1" fill="#ffd9a0" stroke="#b55c00" stroke-width="1.2"/></svg>
<span class="t" style="left:178px;top:982px;color:#fff;letter-spacing:-0.600px;">Pose Mode</span>
<svg style="left:269px;top:980.5px" width="7" height="14" viewBox="0 0 7 14"><path d="M3.5 0.4 L6.8 5.3 L0.2 5.3 Z M3.5 12.9 L6.8 7.8 L0.2 7.8 Z" fill="#b4b4b4"/></svg>
<div class="menu" style="left:291px;top:977px;width:35px;height:20px;border-radius:5px 5px 5px 5px;"></div>
<svg style="left:295px;top:979px" width="16" height="16" viewBox="0 0 16 16"><defs><linearGradient id="sph2" x1="0.2" y1="0.1" x2="0.9" y2="0.95"><stop offset="0" stop-color="#fff"/><stop offset="0.55" stop-color="#f4f4f4"/><stop offset="1" stop-color="#9a9a9a"/></linearGradient></defs><circle cx="8" cy="8" r="6.2" fill="url(#sph2)" stroke="#1a1a1a" stroke-width="0.8"/></svg>
<svg style="left:316.3px;top:980.5px" width="7" height="14" viewBox="0 0 7 14"><path d="M3.5 0.4 L6.8 5.3 L0.2 5.3 Z M3.5 12.9 L6.8 7.8 L0.2 7.8 Z" fill="#b4b4b4"/></svg>
<div class="" style="left:334px;top:977px;width:55px;height:20px;background:#222;box-shadow:0 1px 0 rgba(255,255,255,.09);border-radius:5px 5px 5px 5px;"></div>
<div class="menu" style="left:335px;top:978px;width:33px;height:18px;border:none;box-shadow:none;border-radius:4px 0px 0px 4px;"></div>
<div class="togc" style="left:369px;top:978px;width:19px;height:18px;border:none;box-shadow:none;border-radius:0px 4px 4px 0px;"></div>
<svg style="left:338px;top:979px" width="16" height="16" viewBox="0 0 16 16"><path d="M1 4.5 V1 H4.5 M11.5 1 H15 V4.5 M15 11.5 V15 H11.5 M4.5 15 H1 V11.5" stroke="#111" stroke-width="2.6" fill="none"/><path d="M1 4.5 V1 H4.5 M11.5 1 H15 V4.5 M15 11.5 V15 H11.5 M4.5 15 H1 V11.5" stroke="#fff" stroke-width="1.2" fill="none"/><circle cx="8" cy="8" r="3.6" fill="#777" opacity="0.8"/><rect x="6.2" y="6.2" width="3.6" height="3.6" fill="#fff" stroke="#1144cc" stroke-width="1.3"/></svg>
<svg style="left:359.3px;top:980.5px" width="7" height="14" viewBox="0 0 7 14"><path d="M3.5 0.4 L6.8 5.3 L0.2 5.3 Z M3.5 12.9 L6.8 7.8 L0.2 7.8 Z" fill="#b4b4b4"/></svg>
<svg style="left:370px;top:979px" width="18" height="16" viewBox="0 0 18 16"><circle cx="3" cy="3" r="1.7" fill="#fff" stroke="#2a55b8" stroke-width="1.1"/><circle cx="8" cy="3" r="1.7" fill="#fff" stroke="#2a55b8" stroke-width="1.1"/><circle cx="13" cy="3" r="1.7" fill="#fff" stroke="#2a55b8" stroke-width="1.1"/><path d="M0.8 10.5 L4.8 6.8 L4.8 9.4 L11.2 9.4 L11.2 6.8 L15.2 10.5 L11.2 14.2 L11.2 11.6 L4.8 11.6 L4.8 14.2 Z" fill="#fff" stroke="#222" stroke-width="1" stroke-linejoin="round"/></svg>
<div class="" style="left:397px;top:977px;width:150px;height:20px;background:#222;box-shadow:0 1px 0 rgba(255,255,255,.09);border-radius:5px 5px 5px 5px;"></div>
<div class="togs" style="left:398px;top:978px;width:18px;height:18px;border:none;box-shadow:none;border-radius:4px 0px 0px 4px;"></div>
<div class="togs" style="left:417px;top:978px;width:19px;height:18px;border:none;box-shadow:none;border-radius:0px 0px 0px 0px;"></div>
<div class="togc" style="left:437px;top:978px;width:19px;height:18px;border:none;box-shadow:none;border-radius:0px 0px 0px 0px;"></div>
<div class="togc" style="left:457px;top:978px;width:19px;height:18px;border:none;box-shadow:none;border-radius:0px 0px 0px 0px;"></div>
<div class="menu" style="left:477px;top:978px;width:69px;height:18px;border:none;box-shadow:none;border-radius:0px 4px 4px 0px;"></div>
<svg style="left:399px;top:978px" width="18" height="18" viewBox="0 0 18 18"><path d="M8 11 L8 2.5" stroke="#0f2f80" stroke-width="3.2" stroke-linecap="round"/><path d="M8 11 L8 2.5" stroke="#6fa0ff" stroke-width="1.6" stroke-linecap="round"/><path d="M8 11 L1.8 15" stroke="#701010" stroke-width="3.2" stroke-linecap="round"/><path d="M8 11 L1.8 15" stroke="#f0503c" stroke-width="1.6" stroke-linecap="round"/><path d="M8 11 L14.2 15" stroke="#2a6a00" stroke-width="3.2" stroke-linecap="round"/><path d="M8 11 L14.2 15" stroke="#78d828" stroke-width="1.6" stroke-linecap="round"/><circle cx="8" cy="11" r="1.1" fill="#eee"/><rect x="7.3" y="1.8" width="1.4" height="1.4" fill="#fff"/><rect x="1.2" y="14.3" width="1.4" height="1.4" fill="#fff"/><rect x="13.6" y="14.3" width="1.4" height="1.4" fill="#fff"/></svg>
<svg style="left:418px;top:978px" width="18" height="18" viewBox="0 0 18 18"><path d="M2.6 14.4 L10 7 " stroke="#0f2f80" stroke-width="3.4" stroke-linecap="round"/><path d="M6.6 4.8 L14.8 2 L12 10.2 Z" fill="#78a8f8" stroke="#0f2f80" stroke-width="1.2" stroke-linejoin="round"/><path d="M2.6 14.4 L10 7" stroke="#78a8f8" stroke-width="1.7" stroke-linecap="round"/></svg>
<svg style="left:438px;top:978px" width="18" height="18" viewBox="0 0 18 18"><path d="M3 14.5 C3 8 7 3.8 13.6 3.6" stroke="#5f7fb8" stroke-width="3.2" fill="none" stroke-linecap="round"/><path d="M3 14.5 C3 8 7 3.8 13.6 3.6" stroke="#9db4dd" stroke-width="1.6" fill="none" stroke-linecap="round"/></svg>
<svg style="left:458px;top:978px" width="18" height="18" viewBox="0 0 18 18"><path d="M2.4 14.4 L9.5 7.5" stroke="#5f7fb8" stroke-width="3.2" stroke-linecap="round"/><path d="M2.4 14.4 L9.5 7.5" stroke="#9db4dd" stroke-width="1.5" stroke-linecap="round"/><rect x="8.3" y="2.8" width="6.2" height="6.4" fill="#9db4dd" stroke="#5f7fb8" stroke-width="1.1"/></svg>
<span class="t" style="left:481px;top:982px;color:#fff;letter-spacing:-0.600px;">Normal</span>
<svg style="left:533px;top:980.5px" width="7" height="14" viewBox="0 0 7 14"><path d="M3.5 0.4 L6.8 5.3 L0.2 5.3 Z M3.5 12.9 L6.8 7.8 L0.2 7.8 Z" fill="#b4b4b4"/></svg>
<div class="" style="left:555px;top:977px;width:50px;height:20px;background:#262626;box-shadow:0 1px 0 rgba(255,255,255,.09);border-radius:4px 4px 4px 4px;"></div>
<div class="" style="left:556px;top:978px;width:8px;height:8px;background:#999;border-radius:3px 0px 0px 0px;"></div>
<div class="" style="left:565px;top:978px;width:9px;height:8px;background:#999;border-radius:0px 0px 0px 0px;"></div>
<div class="" style="left:575px;top:978px;width:9px;height:8px;background:#999;border-radius:0px 0px 0px 0px;"></div>
<div class="" style="left:585px;top:978px;width:9px;height:8px;background:#999;border-radius:0px 0px 0px 0px;"></div>
<div class="" style="left:595px;top:978px;width:9px;height:8px;background:#999;border-radius:0px 3px 0px 0px;"></div>
<div class="" style="left:556px;top:987px;width:8px;height:9px;background:#646464;border-radius:0px 0px 0px 3px;"></div>
<div class="" style="left:565px;top:987px;width:9px;height:9px;background:#999;border-radius:0px 0px 0px 0px;"></div>
<div class="" style="left:575px;top:987px;width:9px;height:9px;background:#999;border-radius:0px 0px 0px 0px;"></div>
<div class="" style="left:585px;top:987px;width:9px;height:9px;background:#999;border-radius:0px 0px 0px 0px;"></div>
<div class="" style="left:595px;top:987px;width:9px;height:9px;background:#999;border-radius:0px 0px 3px 0px;"></div>
<div class="" style="left:613px;top:977px;width:50px;height:20px;background:#262626;box-shadow:0 1px 0 rgba(255,255,255,.09);border-radius:4px 4px 4px 4px;"></div>
<div class="" style="left:614px;top:978px;width:8px;height:8px;background:#999;border-radius:3px 0px 0px 0px;"></div>
<div class="" style="left:623px;top:978px;width:9px;height:8px;background:#999;border-radius:0px 0px 0px 0px;"></div>
<div class="" style="left:633px;top:978px;width:9px;height:8px;background:#999;border-radius:0px 0px 0px 0px;"></div>
<div class="" style="left:643px;top:978px;width:9px;height:8px;background:#999;border-radius:0px 0px 0px 0px;"></div>
<div class="" style="left:653px;top:978px;width:9px;height:8px;background:#999;border-radius:0px 3px 0px 0px;"></div>
<div class="" style="left:614px;top:987px;width:8px;height:9px;background:#999;border-radius:0px 0px 0px 3px;"></div>
<div class="" style="left:623px;top:987px;width:9px;height:9px;background:#999;border-radius:0px 0px 0px 0px;"></div>
<div class="" style="left:633px;top:987px;width:9px;height:9px;background:#999;border-radius:0px 0px 0px 0px;"></div>
<div class="" style="left:643px;top:987px;width:9px;height:9px;background:#999;border-radius:0px 0px 0px 0px;"></div>
<div class="" style="left:653px;top:987px;width:9px;height:9px;background:#999;border-radius:0px 0px 3px 0px;"></div>
<svg style="left:555.5px;top:977.6px" width="8" height="8" viewBox="0 0 8 8"><circle cx="4" cy="4" r="2.3" fill="#8a8a8a" stroke="#6c6c6c" stroke-width="0.9"/></svg>
<svg style="left:555.5px;top:987.5px" width="8" height="8" viewBox="0 0 8 8"><circle cx="4" cy="4" r="2.6" fill="#ffb060" stroke="#b05000" stroke-width="1.1"/><circle cx="4" cy="4" r="1" fill="#fff3dd"/></svg>
<svg style="left:652.5px;top:977.6px" width="8" height="8" viewBox="0 0 8 8"><circle cx="4" cy="4" r="2.3" fill="#8a8a8a" stroke="#6c6c6c" stroke-width="0.9"/></svg>
<svg style="left:652.5px;top:987.5px" width="8" height="8" viewBox="0 0 8 8"><circle cx="4" cy="4" r="2.3" fill="#8a8a8a" stroke="#6c6c6c" stroke-width="0.9"/></svg>
<div class="togsel" style="left:671px;top:977px;width:20px;height:20px;border-radius:5px 5px 5px 5px;box-shadow:0 1px 0 rgba(255,255,255,.09);"></div>
<svg style="left:673px;top:979px" width="18" height="18" viewBox="0 0 18 18"><defs><linearGradient id="gls" x1="0" y1="0" x2="1" y2="1"><stop offset="0" stop-color="#9a9a9a"/><stop offset="1" stop-color="#e8e8e8"/></linearGradient></defs><rect x="2" y="2" width="9.6" height="11" rx="0.8" fill="url(#gls)" stroke="#e6e6e6" stroke-width="1"/><rect x="1.2" y="1.2" width="11.2" height="12.6" rx="1.2" fill="none" stroke="#222" stroke-width="0.8"/><rect x="3.3" y="11" width="5.5" height="0.9" fill="#555"/><rect x="11.3" y="3.6" width="3.6" height="5.4" rx="1.8" fill="none" stroke="#111" stroke-width="2.6"/><rect x="11.3" y="8.4" width="3.6" height="5.8" rx="1.8" fill="none" stroke="#111" stroke-width="2.6"/><rect x="11.3" y="3.6" width="3.6" height="5.4" rx="1.8" fill="none" stroke="#fff" stroke-width="1.2"/><rect x="11.3" y="8.4" width="3.6" height="5.8" rx="1.8" fill="none" stroke="#fff" stroke-width="1.2"/></svg>
<div class="" style="left:696px;top:977px;width:186px;height:20px;background:#222;box-shadow:0 1px 0 rgba(255,255,255,.09);border-radius:5px 5px 5px 5px;"></div>
<div class="togc" style="left:697px;top:978px;width:18px;height:18px;border:none;box-shadow:none;border-radius:4px 0px 0px 4px;"></div>
<div class="menu" style="left:716px;top:978px;width:34px;height:18px;border:none;box-shadow:none;border-radius:0px 0px 0px 0px;"></div>
<div class="menu" style="left:751px;top:978px;width:110px;height:18px;border:none;box-shadow:none;border-radius:0px 0px 0px 0px;"></div>
<div class="togc" style="left:862px;top:978px;width:19px;height:18px;border:none;box-shadow:none;border-radius:0px 4px 4px 0px;"></div>
<svg style="left:698px;top:978px" width="18" height="18" viewBox="0 0 18 18"><path d="M3.2 7.6 L7.2 3.4 A4.4 4.4 0 0 1 13.4 9.6 L9.2 13.8 L7 11.6 L11.2 7.4 A1.3 1.3 0 0 0 9.4 5.6 L5.4 9.8 Z" fill="#9c9c9c" stroke="#6e6e6e" stroke-width="1"/><path d="M3.4 7.8 L5.4 9.7 L6.7 8.3 L4.7 6.4 Z M7.2 11.6 L9.2 13.6 L10.5 12.2 L8.5 10.2 Z" fill="#e4e4e4"/></svg>
<svg style="left:719.4px;top:979.3px" width="16" height="16" viewBox="0 0 16 16"><path d="M8 1.2 L14.2 4 L14.2 11.4 L8 14.8 L1.8 11.4 L1.8 4 Z" fill="#fafafa" stroke="#222" stroke-width="1"/><path d="M8 7 L14.2 4 L14.2 11.4 L8 14.8 Z" fill="#e2e2e2"/><path d="M8 1.2 L14.2 4 L8 7 L1.8 4 Z" fill="#fff"/></svg>
<span class="t" style="left:755px;top:982px;color:#fff;letter-spacing:-0.600px;">Closest</span>
<svg style="left:741.4px;top:980.5px" width="7" height="14" viewBox="0 0 7 14"><path d="M3.5 0.4 L6.8 5.3 L0.2 5.3 Z M3.5 12.9 L6.8 7.8 L0.2 7.8 Z" fill="#b4b4b4"/></svg>
<svg style="left:848.4px;top:980.5px" width="7" height="14" viewBox="0 0 7 14"><path d="M3.5 0.4 L6.8 5.3 L0.2 5.3 Z M3.5 12.9 L6.8 7.8 L0.2 7.8 Z" fill="#b4b4b4"/></svg>
<svg style="left:863px;top:978px" width="18" height="18" viewBox="0 0 18 18"><path d="M1.2 5 V1.2 H5 M12.4 1.2 H16.2 V5 M16.2 12.4 V16.2 H12.4 M5 16.2 H1.2 V12.4" stroke="#3f68b0" stroke-width="2.6" fill="none"/><path d="M1.2 5 V1.2 H5 M12.4 1.2 H16.2 V5 M16.2 12.4 V16.2 H12.4 M5 16.2 H1.2 V12.4" stroke="#b9d2ff" stroke-width="1.2" fill="none"/><path d="M4.2 5.2 H12.6 V12.2 H4.2 V10.2 H10.4 V7.2 H4.2 Z" fill="#fff" stroke="#222" stroke-width="1" stroke-linejoin="round"/></svg>
<div class="" style="left:887px;top:977px;width:40px;height:20px;background:#2b2b2b;box-shadow:0 1px 0 rgba(255,255,255,.09);border-radius:5px 5px 5px 5px;"></div>
<div class="tool" style="left:888px;top:978px;width:18px;height:18px;border:none;box-shadow:none;border-radius:4px 0px 0px 4px;"></div>
<div class="tool" style="left:907px;top:978px;width:19px;height:18px;border:none;box-shadow:none;border-radius:0px 4px 4px 0px;"></div>
<svg style="left:889px;top:978px" width="18" height="18" viewBox="0 0 18 18"><rect x="1.2" y="5" width="12.8" height="9.6" rx="1" fill="#6a6a6a" stroke="#111" stroke-width="1"/><rect x="1.8" y="5.5" width="11.6" height="2.8" fill="#e8e8e8"/><rect x="2.4" y="3.4" width="3.6" height="2" fill="#ddd" stroke="#111" stroke-width="0.7"/><rect x="2.6" y="6.2" width="1.2" height="1.2" fill="#e00"/><circle cx="9" cy="10.4" r="3.7" fill="#d8d8d8" stroke="#111" stroke-width="0.9"/><circle cx="9" cy="10.4" r="2.4" fill="#3a2a40"/><circle cx="9.6" cy="10.9" r="1.1" fill="#a03030"/><circle cx="8.2" cy="9.6" r="0.7" fill="#9ab"/><circle cx="13.6" cy="3.8" r="3.1" fill="#e8c020" stroke="#f8e070" stroke-width="0.6"/><path d="M13.6 1.6 V6 M11.4 3.8 H15.8" stroke="#fff" stroke-width="1.3"/></svg>
<svg style="left:908px;top:978px" width="18" height="18" viewBox="0 0 18 18"><rect x="2.4" y="8.6" width="12.8" height="7" fill="#4a4a4a" stroke="#111" stroke-width="1"/><rect x="2.4" y="8.2" width="12.8" height="2.2" fill="#111"/><path d="M4 8.6 h2 v1.4 h-2 z M8 8.6 h2 v1.4 h-2 z M12 8.6 h2 v1.4 h-2 z" fill="#fff"/><path d="M2.6 7.2 L14.6 1.4 L15.4 3.2 L3.6 9 Z" fill="#111"/><path d="M5.2 6.3 l1.8 -0.9 l0.6 1.2 l-1.8 0.9 z M9 4.5 l1.8 -0.9 l0.6 1.2 l-1.8 0.9 z M12.6 2.7 l1.7 -0.8 l0.6 1.2 l-1.7 0.8 z" fill="#fff"/><path d="M1.4 4.6 L3.6 4.2 L4.4 9.2 L2 9.4 Z" fill="#5f90e0" stroke="#1a3a80" stroke-width="0.7"/><rect x="7" y="12.3" width="5.6" height="0.9" fill="#777"/><rect x="9.4" y="11" width="0.9" height="3.6" fill="#777"/></svg>
<div class="" style="left:932px;top:977px;width:60px;height:20px;background:#2b2b2b;box-shadow:0 1px 0 rgba(255,255,255,.09);border-radius:5px 5px 5px 5px;"></div>
<div class="tool" style="left:933px;top:978px;width:18px;height:18px;border:none;box-shadow:none;border-radius:4px 0px 0px 4px;"></div>
<div class="tool" style="left:952px;top:978px;width:19px;height:18px;border:none;box-shadow:none;border-radius:0px 0px 0px 0px;"></div>
<div class="tool" style="left:972px;top:978px;width:19px;height:18px;border:none;box-shadow:none;border-radius:0px 4px 4px 0px;"></div>
<svg style="left:934px;top:978px" width="18" height="18" viewBox="0 0 18 18"><g opacity="1.0"><rect x="7.2" y="2.8" width="8.6" height="9.6" rx="0.8" fill="#b9ac8c" stroke="#2a2418" stroke-width="1"/><rect x="9.2" y="1.3" width="4.6" height="2.6" rx="0.6" fill="#eee" stroke="#2a2418" stroke-width="0.8"/></g><path d="M2 15.6 L8.6 9 M4.6 8.6 L9 8.6 L9 13" stroke="#111" stroke-width="3.6" fill="none" stroke-linecap="round"/><path d="M2 15.6 L8.6 9 M4.4 8.6 L9 8.6 L9 13.2" stroke="#fff" stroke-width="1.8" fill="none" stroke-linecap="round"/></svg>
<svg style="left:953px;top:978px" width="18" height="18" viewBox="0 0 18 18"><g opacity="1.0"><rect x="1.6" y="2.8" width="8.6" height="9.6" rx="0.8" fill="#b9ac8c" stroke="#2a2418" stroke-width="1"/><rect x="3.6" y="1.3" width="4.6" height="2.6" rx="0.6" fill="#eee" stroke="#2a2418" stroke-width="0.8"/></g><path d="M9 9.4 L15.4 15.8 M11.2 16 L15.6 16 L15.6 11.6" stroke="#111" stroke-width="3.6" fill="none" stroke-linecap="round"/><path d="M9 9.4 L15.4 15.8 M11 16 L15.6 16 L15.6 11.4" stroke="#fff" stroke-width="1.8" fill="none" stroke-linecap="round"/></svg>
<svg style="left:973px;top:978px" width="18" height="18" viewBox="0 0 18 18"><g opacity="0.55"><rect x="6" y="2.8" width="8.6" height="9.6" rx="0.8" fill="#b9ac8c" stroke="#2a2418" stroke-width="1"/><rect x="8" y="1.3" width="4.6" height="2.6" rx="0.6" fill="#eee" stroke="#2a2418" stroke-width="0.8"/></g><circle cx="14.6" cy="2.2" r="1.1" fill="#f8e060" stroke="#5a4a00" stroke-width="0.5"/><circle cx="14.6" cy="5.6" r="1.1" fill="#f8e060" stroke="#5a4a00" stroke-width="0.5"/><circle cx="14.6" cy="9" r="1.1" fill="#f8e060" stroke="#5a4a00" stroke-width="0.5"/><circle cx="14.6" cy="12.4" r="1.1" fill="#f8e060" stroke="#5a4a00" stroke-width="0.5"/><circle cx="14.6" cy="15.8" r="1.1" fill="#f8e060" stroke="#5a4a00" stroke-width="0.5"/><path d="M9 9 L2.4 15.6 M2.2 11.2 L2.2 15.8 L6.8 15.8" stroke="#1a3a80" stroke-width="3.6" fill="none" stroke-linecap="round"/><path d="M9 9 L2.4 15.6 M2.2 11 L2.2 15.8 L7 15.8" stroke="#a8c8ff" stroke-width="1.8" fill="none" stroke-linecap="round"/></svg>
<svg style="left:1906px;top:0px" width="12" height="12" viewBox="0 0 12 12"><path d="M0 0 L12 12" stroke="#fff" stroke-width="1.1"/><path d="M1.5 0 L12 10.5" stroke="#111" stroke-width="1.1"/><path d="M3 0 L12 9" stroke="#fff" stroke-width="1.1"/><path d="M4.5 0 L12 7.5" stroke="#111" stroke-width="1.1"/><path d="M6 0 L12 6" stroke="#fff" stroke-width="1.1"/><path d="M7.5 0 L12 4.5" stroke="#111" stroke-width="1.1"/><path d="M9 0 L12 3" stroke="#fff" stroke-width="1.1"/><path d="M10.5 0 L12 1.5" stroke="#111" stroke-width="1.1"/></svg>
<svg style="left:1906px;top:27px" width="12" height="12" viewBox="0 0 12 12"><path d="M0 0 L12 12" stroke="#fff" stroke-width="1.1"/><path d="M1.5 0 L12 10.5" stroke="#111" stroke-width="1.1"/><path d="M3 0 L12 9" stroke="#fff" stroke-width="1.1"/><path d="M4.5 0 L12 7.5" stroke="#111" stroke-width="1.1"/><path d="M6 0 L12 6" stroke="#fff" stroke-width="1.1"/><path d="M7.5 0 L12 4.5" stroke="#111" stroke-width="1.1"/><path d="M9 0 L12 3" stroke="#fff" stroke-width="1.1"/><path d="M10.5 0 L12 1.5" stroke="#111" stroke-width="1.1"/></svg>
<svg style="left:0px;top:16px" width="10" height="10" viewBox="0 0 10 10"><path d="M0 0 L10 10" stroke="#111" stroke-width="1.1"/><path d="M0 1.5 L8.5 10" stroke="#fff" stroke-width="1.1"/><path d="M0 3 L7 10" stroke="#111" stroke-width="1.1"/><path d="M0 4.5 L5.5 10" stroke="#fff" stroke-width="1.1"/><path d="M0 6 L4 10" stroke="#111" stroke-width="1.1"/><path d="M0 7.5 L2.5 10" stroke="#fff" stroke-width="1.1"/><path d="M0 9 L1 10" stroke="#111" stroke-width="1.1"/><path d="M0 10.5 L-0.5 10" stroke="#fff" stroke-width="1.1"/></svg>
<svg style="left:0px;top:992px" width="8" height="8" viewBox="0 0 8 8"><path d="M0 0 L8 8" stroke="#111" stroke-width="1.1"/><path d="M0 1.5 L6.5 8" stroke="#fff" stroke-width="1.1"/><path d="M0 3 L5 8" stroke="#111" stroke-width="1.1"/><path d="M0 4.5 L3.5 8" stroke="#fff" stroke-width="1.1"/><path d="M0 6 L2 8" stroke="#111" stroke-width="1.1"/><path d="M0 7.5 L0.5 8" stroke="#fff" stroke-width="1.1"/></svg>
<svg style="left:1889px;top:956px" width="11" height="11" viewBox="0 0 11 11"><circle cx="5.5" cy="5.5" r="4.2" fill="#f2f2f2" stroke="#333" stroke-width="1"/><path d="M5.5 2.8 V8.2 M2.8 5.5 H8.2" stroke="#222" stroke-width="1.1"/></svg>
<svg style="left:161px;top:28px;background:#393939" width="1447" height="945" viewBox="161 28 1447 945" shape-rendering="crispEdges" stroke-width="1"><line x1="161" y1="-45.0" x2="1608" y2="-84.1" stroke="#4e4e4e"/><line x1="161" y1="3.6" x2="1608" y2="-35.5" stroke="#4e4e4e"/><line x1="161" y1="52.2" x2="1608" y2="13.1" stroke="#4e4e4e"/><line x1="161" y1="100.8" x2="1608" y2="61.7" stroke="#4e4e4e"/><line x1="161" y1="149.4" x2="1608" y2="110.3" stroke="#4e4e4e"/><line x1="161" y1="198.0" x2="1608" y2="158.9" stroke="#4e4e4e"/><line x1="161" y1="246.6" x2="1608" y2="207.5" stroke="#4e4e4e"/><line x1="161" y1="295.2" x2="1608" y2="256.1" stroke="#4e4e4e"/><line x1="161" y1="343.8" x2="1608" y2="304.7" stroke="#4e4e4e"/><line x1="161" y1="392.4" x2="1608" y2="353.3" stroke="#4e4e4e"/><line x1="161" y1="441.0" x2="1608" y2="401.9" stroke="#4e4e4e"/><line x1="161" y1="489.6" x2="1608" y2="450.5" stroke="#4e4e4e"/><line x1="161" y1="538.2" x2="1608" y2="499.1" stroke="#4e4e4e"/><line x1="161" y1="586.8" x2="1608" y2="547.7" stroke="#4e4e4e"/><line x1="161" y1="635.4" x2="1608" y2="596.3" stroke="#4e4e4e"/><line x1="161" y1="684.0" x2="1608" y2="644.9" stroke="#4e4e4e"/><line x1="161" y1="781.2" x2="1608" y2="742.1" stroke="#4e4e4e"/><line x1="161" y1="829.8" x2="1608" y2="790.7" stroke="#4e4e4e"/><line x1="161" y1="878.4" x2="1608" y2="839.3" stroke="#4e4e4e"/><line x1="161" y1="927.0" x2="1608" y2="887.9" stroke="#4e4e4e"/><line x1="161" y1="975.6" x2="1608" y2="936.5" stroke="#4e4e4e"/><line x1="161" y1="1024.2" x2="1608" y2="985.1" stroke="#4e4e4e"/><line x1="-1220.8" y1="27" x2="-369.6" y2="974" stroke="#4e4e4e"/><line x1="-880.8" y1="27" x2="-29.6" y2="974" stroke="#4e4e4e"/><line x1="-540.8" y1="27" x2="310.4" y2="974" stroke="#4e4e4e"/><line x1="-200.8" y1="27" x2="650.4" y2="974" stroke="#4e4e4e"/><line x1="479.2" y1="27" x2="1330.4" y2="974" stroke="#4e4e4e"/><line x1="819.2" y1="27" x2="1670.4" y2="974" stroke="#4e4e4e"/><line x1="1159.2" y1="27" x2="2010.4" y2="974" stroke="#4e4e4e"/><line x1="1499.2" y1="27" x2="2350.4" y2="974" stroke="#4e4e4e"/><line x1="1839.2" y1="27" x2="2690.4" y2="974" stroke="#4e4e4e"/><line x1="139.2" y1="27" x2="990.4" y2="974" stroke="#6b2626"/><line x1="161" y1="732.6" x2="1608" y2="693.5" stroke="#2f7d12"/><line x1="749.0" y1="192.0" x2="491.5" y2="466.0" stroke="#000" stroke-dasharray="4.12 4.12"/><line x1="749.0" y1="192.0" x2="991.5" y2="477.0" stroke="#000" stroke-dasharray="3.94 3.94"/><line x1="754.0" y1="248.0" x2="1457.5" y2="695.0" stroke="#000" stroke-dasharray="3.55 3.55"/><line x1="582.5" y1="423.0" x2="1457.5" y2="695.0" stroke="#000" stroke-dasharray="3.14 3.14"/><line x1="631.0" y1="475.0" x2="1457.5" y2="695.0" stroke="#000" stroke-dasharray="3.10 3.10"/><line x1="1090.0" y1="480.5" x2="1031.5" y2="506.5" stroke="#000" stroke-dasharray="3.28 3.28"/><line x1="1034.5" y1="512.5" x2="1042.0" y2="563.5" stroke="#000" stroke-dasharray="3.03 3.03"/><line x1="1064.0" y1="568.1" x2="1071.7" y2="636.0" stroke="#000" stroke-dasharray="3.02 3.02"/><line x1="311.4" y1="596.6" x2="340.0" y2="558.7" stroke="#000" stroke-dasharray="3.76 3.76"/><line x1="351.0" y1="587.8" x2="369.7" y2="545.0" stroke="#000" stroke-dasharray="3.27 3.27"/><line x1="384.0" y1="572.0" x2="389.0" y2="532.0" stroke="#000" stroke-dasharray="3.02 3.02"/><line x1="409.5" y1="520.0" x2="413.0" y2="545.0" stroke="#000" stroke-dasharray="3.03 3.03"/><line x1="400.0" y1="605.0" x2="545.0" y2="642.5" stroke="#000" stroke-dasharray="3.10 3.10"/><line x1="452.8" y1="648.0" x2="572.8" y2="723.2" stroke="#000" stroke-dasharray="3.54 3.54"/><line x1="517.6" y1="653.6" x2="1457.5" y2="695.0" stroke="#000" stroke-dasharray="3.00 3.00"/><line x1="552.0" y1="730.4" x2="1457.5" y2="695.0" stroke="#000" stroke-dasharray="3.00 3.00"/><line x1="894.0" y1="611.0" x2="1003.0" y2="688.0" stroke="#000" stroke-dasharray="3.67 3.67"/><line x1="905.0" y1="619.0" x2="1022.5" y2="702.0" stroke="#000" stroke-dasharray="3.67 3.67"/><line x1="981.0" y1="693.3" x2="1457.5" y2="695.0" stroke="#000" stroke-dasharray="3.00 3.00"/><line x1="1000.0" y1="705.0" x2="1457.5" y2="695.0" stroke="#000" stroke-dasharray="3.00 3.00"/><path d="M749.5 208.0 C752.0 208.0 754.8 210.7 757.0 213.0 C759.2 215.3 760.9 218.3 762.5 222.0 C764.1 225.7 765.6 231.2 766.5 235.0 C767.4 238.8 768.1 241.8 768.0 245.0 C767.9 248.2 767.3 251.5 766.0 254.0 C764.7 256.5 762.8 258.5 760.0 260.0 C757.2 261.5 753.0 263.0 749.5 263.0 C746.0 263.0 741.8 261.5 739.0 260.0 C736.2 258.5 734.3 256.5 733.0 254.0 C731.7 251.5 731.1 248.2 731.0 245.0 C730.9 241.8 731.6 238.8 732.5 235.0 C733.4 231.2 734.9 225.7 736.5 222.0 C738.1 218.3 739.8 215.3 742.0 213.0 C744.2 210.7 747.0 208.0 749.5 208.0 Z" stroke="#78eaff" fill="none" /><path d="M748.0 209.0 L748.0 262.0" stroke="#78eaff" fill="none" /><path d="M751.0 209.0 L750.0 262.0" stroke="#78eaff" fill="none" /><path d="M749.0 208.0 L752.0 235.0 L750.0 262.0" stroke="#78eaff" fill="none" /><path d="M732.0 243.0 L767.0 244.0" stroke="#78eaff" fill="none" /><path d="M732.0 247.0 L767.0 246.0" stroke="#78eaff" fill="none" /><path d="M732.0 246.0 C734.8 245.3 743.2 242.2 749.0 242.0 C754.8 241.8 764.0 244.5 767.0 245.0" stroke="#78eaff" fill="none" /><path d="M618.0 330.5 L650.0 338.8 L599.5 520.5 L567.0 511.0 Z" stroke="#50c8ff" fill="none" /><path d="M622.0 331.5 L571.1 512.2" stroke="#50c8ff" fill="none" /><path d="M626.3 332.6 L575.4 513.5" stroke="#50c8ff" fill="none" /><path d="M630.5 333.7 L579.7 514.7" stroke="#50c8ff" fill="none" /><path d="M634.3 334.7 L583.6 515.8" stroke="#50c8ff" fill="none" /><path d="M638.0 335.7 L587.3 516.9" stroke="#50c8ff" fill="none" /><path d="M641.3 336.5 L590.6 517.9" stroke="#50c8ff" fill="none" /><path d="M644.2 337.3 L593.6 518.8" stroke="#50c8ff" fill="none" /><path d="M647.0 338.0 L596.4 519.6" stroke="#50c8ff" fill="none" /><path d="M649.0 338.5 L598.5 520.2" stroke="#50c8ff" fill="none" /><path d="M618.0 330.5 C620.8 330.9 629.7 331.8 635.0 333.1 C640.3 334.5 647.5 337.9 650.0 338.8" stroke="#50c8ff" fill="none" /><path d="M567.0 511.0 C569.5 512.0 576.8 515.7 582.2 517.2 C587.7 518.8 596.6 520.0 599.5 520.5" stroke="#50c8ff" fill="none" /><path d="M670.0 408.8 L692.5 417.5 L635.0 552.0 L610.8 543.8 Z" stroke="#50c8ff" fill="none" /><path d="M672.8 409.9 L613.8 544.8" stroke="#50c8ff" fill="none" /><path d="M675.8 411.0 L617.0 545.9" stroke="#50c8ff" fill="none" /><path d="M678.8 412.2 L620.2 547.0" stroke="#50c8ff" fill="none" /><path d="M681.5 413.2 L623.1 548.0" stroke="#50c8ff" fill="none" /><path d="M684.1 414.2 L625.9 548.9" stroke="#50c8ff" fill="none" /><path d="M686.4 415.1 L628.4 549.8" stroke="#50c8ff" fill="none" /><path d="M688.5 415.9 L630.6 550.5" stroke="#50c8ff" fill="none" /><path d="M690.4 416.7 L632.7 551.2" stroke="#50c8ff" fill="none" /><path d="M691.8 417.2 L634.2 551.7" stroke="#50c8ff" fill="none" /><path d="M670.0 408.8 C672.0 409.3 678.5 410.2 682.2 411.6 C686.0 413.1 690.8 416.5 692.5 417.5" stroke="#50c8ff" fill="none" /><path d="M610.8 543.8 C612.6 544.7 617.9 548.0 621.9 549.4 C625.9 550.8 632.8 551.6 635.0 552.0" stroke="#50c8ff" fill="none" /><path d="M887.4 328.4 L936.4 338.9 L976.9 365.7 L1004.8 407.8" stroke="#50c8ff" fill="none" /><path d="M1004.8 407.8 C1005.5 410.7 1007.8 418.8 1009.0 425.0 C1010.2 431.2 1011.3 439.6 1012.0 445.0 C1012.7 450.4 1013.1 455.2 1013.3 457.2" stroke="#50c8ff" fill="none" /><path d="M887.4 328.4 C875.3 341.5 871.3 388.3 871.3 437.3" stroke="#50c8ff" fill="none"/><path d="M887.4 328.4 C899.9 341.6 904.0 388.8 904.0 438.2" stroke="#50c8ff" fill="none"/><path d="M904.0 438.2 L903.8 473.3" stroke="#50c8ff" fill="none" /><path d="M936.4 338.9 C924.3 350.8 920.3 393.5 920.3 438.2" stroke="#50c8ff" fill="none"/><path d="M936.4 338.9 C946.8 351.2 950.3 395.1 950.3 441.0" stroke="#50c8ff" fill="none"/><path d="M950.3 441.0 L950.3 471.8" stroke="#50c8ff" fill="none" /><path d="M976.9 365.7 C967.6 374.9 964.5 407.7 964.5 442.0" stroke="#50c8ff" fill="none"/><path d="M976.9 365.7 C984.5 375.3 987.1 409.8 987.1 445.8" stroke="#50c8ff" fill="none"/><path d="M987.1 445.8 L987.1 468.0" stroke="#50c8ff" fill="none" /><path d="M1004.8 407.8 C999.5 412.6 997.8 429.7 997.8 447.7" stroke="#50c8ff" fill="none"/><path d="M1004.8 407.8 C1009.8 413.2 1011.4 432.3 1011.4 452.4" stroke="#50c8ff" fill="none"/><path d="M871.3 437.3 L904.0 438.2 L950.3 441.0 L987.1 445.8 L1011.4 452.4 L1013.3 457.2" stroke="#50c8ff" fill="none" /><path d="M903.8 473.3 C911.5 473.1 936.4 472.7 950.3 471.8 C964.2 470.9 977.4 469.6 987.1 468.0 C996.8 466.4 1004.2 463.8 1008.6 462.0 C1013.0 460.2 1012.5 458.0 1013.3 457.2" stroke="#50c8ff" fill="none" /><path d="M490.4 404.3 L465.5 410.4 L443.5 425.2 L427.5 448.3 L422.0 475.3" stroke="#50c8ff" fill="none" /><path d="M490.4 404.3 C491.1 405.6 493.6 408.0 494.8 412.0 C496.1 416.0 497.0 421.2 497.9 428.5 C498.8 435.8 499.5 446.6 500.1 456.0 C500.8 465.4 501.5 480.0 501.8 484.8" stroke="#50c8ff" fill="none" /><path d="M487.5 407.0 C487.0 408.8 485.3 412.6 484.7 418.0 C484.1 423.4 483.8 431.6 483.6 439.5 C483.4 447.4 483.6 461.1 483.6 465.4" stroke="#50c8ff" fill="none" /><path d="M465.5 410.4 C467.3 409.7 472.8 406.6 476.5 405.9 C480.2 405.3 485.7 406.4 487.5 406.5" stroke="#50c8ff" fill="none" /><path d="M465.5 410.4 C465.4 411.0 464.1 413.5 464.9 414.0 C465.8 414.6 465.5 413.6 470.4 413.7 C475.3 413.8 490.6 414.6 494.6 414.8" stroke="#50c8ff" fill="none" /><path d="M443.5 425.2 C446.9 424.2 457.2 420.3 464.1 419.1 C471.0 417.9 481.3 418.2 484.7 418.0" stroke="#50c8ff" fill="none" /><path d="M443.5 425.2 C444.9 426.1 448.0 429.6 451.8 430.8 C455.5 432.0 458.2 432.1 466.0 432.4 C473.8 432.7 493.1 432.4 498.5 432.4" stroke="#50c8ff" fill="none" /><path d="M427.5 448.3 C432.1 447.1 446.0 442.9 455.2 441.4 C464.5 439.9 478.4 439.8 483.0 439.5" stroke="#50c8ff" fill="none" /><path d="M427.5 448.3 C429.9 449.4 436.2 453.2 442.1 454.7 C448.0 456.2 453.0 456.7 462.7 457.1 C472.4 457.5 493.9 457.1 500.1 457.1" stroke="#50c8ff" fill="none" /><path d="M422.0 475.3 C427.1 474.1 442.5 469.5 452.8 467.9 C463.1 466.2 478.5 465.8 483.6 465.4" stroke="#50c8ff" fill="none" /><path d="M422.0 475.3 C425.4 476.5 434.8 480.6 442.6 482.2 C450.5 483.9 459.4 484.7 469.3 485.2 C479.2 485.7 496.4 485.2 501.8 485.2" stroke="#50c8ff" fill="none" /><path d="M426.8 499.3 L460.0 513.3 L464.0 519.9 L464.4 526.0 L459.7 530.1 L452.2 531.7 L419.0 517.7 L415.0 511.1 L414.6 505.0 L419.3 500.9 Z" stroke="#50c8ff" fill="none" /><path d="M427.6 504.5 L455.7 516.4 L460.2 524.3 L451.4 526.5 L423.3 514.6 L418.8 506.7 Z" stroke="#50c8ff" fill="none" /><path d="M426.8 499.3 L427.6 504.5" stroke="#50c8ff" fill="none" /><path d="M460.0 513.3 L455.7 516.4" stroke="#50c8ff" fill="none" /><path d="M419.0 517.7 L423.3 514.6" stroke="#50c8ff" fill="none" /><path d="M452.2 531.7 L451.4 526.5" stroke="#50c8ff" fill="none" /><path d="M427.6 504.5 L437.4 520.6 L455.7 516.4" stroke="#50c8ff" fill="none" /><path d="M423.3 514.6 L441.6 510.4 L451.4 526.5" stroke="#50c8ff" fill="none" /><path d="M433.0 506.7 L446.0 524.3" stroke="#50c8ff" fill="none" /><path d="M428.7 516.9 L440.4 509.9" stroke="#50c8ff" fill="none" /><path d="M407.3 527.7 L435.3 557.7 L436.3 565.3 L434.1 571.1 L428.3 572.9 L420.7 571.3 L392.7 541.3 L391.7 533.7 L393.9 527.9 L399.7 526.1 Z" stroke="#50c8ff" fill="none" /><path d="M405.9 532.7 L430.2 558.8 L431.0 567.8 L422.1 566.3 L397.8 540.2 L397.0 531.2 Z" stroke="#50c8ff" fill="none" /><path d="M407.3 527.7 L405.9 532.7" stroke="#50c8ff" fill="none" /><path d="M435.3 557.7 L430.2 558.8" stroke="#50c8ff" fill="none" /><path d="M392.7 541.3 L397.8 540.2" stroke="#50c8ff" fill="none" /><path d="M420.7 571.3 L422.1 566.3" stroke="#50c8ff" fill="none" /><path d="M405.9 532.7 L410.0 553.3 L430.2 558.8" stroke="#50c8ff" fill="none" /><path d="M397.8 540.2 L418.0 545.7 L422.1 566.3" stroke="#50c8ff" fill="none" /><path d="M411.0 538.2 L417.0 560.8" stroke="#50c8ff" fill="none" /><path d="M402.9 545.7 L417.0 544.7" stroke="#50c8ff" fill="none" /><path d="M387.7 554.7 L400.6 585.0 L399.0 592.2 L395.2 596.6 L389.4 596.3 L383.1 592.5 L370.2 562.2 L371.8 555.0 L375.6 550.6 L381.4 550.9 Z" stroke="#50c8ff" fill="none" /><path d="M384.8 558.8 L395.6 584.3 L393.5 592.7 L386.0 588.4 L375.2 562.9 L377.3 554.5 Z" stroke="#50c8ff" fill="none" /><path d="M387.7 554.7 L384.8 558.8" stroke="#50c8ff" fill="none" /><path d="M400.6 585.0 L395.6 584.3" stroke="#50c8ff" fill="none" /><path d="M370.2 562.2 L375.2 562.9" stroke="#50c8ff" fill="none" /><path d="M383.1 592.5 L386.0 588.4" stroke="#50c8ff" fill="none" /><path d="M384.8 558.8 L380.6 575.6 L395.6 584.3" stroke="#50c8ff" fill="none" /><path d="M375.2 562.9 L390.2 571.6 L386.0 588.4" stroke="#50c8ff" fill="none" /><path d="M386.8 563.5 L384.0 583.7" stroke="#50c8ff" fill="none" /><path d="M377.2 567.6 L389.7 570.4" stroke="#50c8ff" fill="none" /><path d="M354.5 571.9 L361.9 608.3 L358.6 615.7 L353.5 619.6 L347.3 618.0 L341.3 612.5 L333.9 576.1 L337.2 568.7 L342.3 564.8 L348.5 566.4 Z" stroke="#50c8ff" fill="none" /><path d="M350.4 575.6 L356.7 606.4 L352.5 615.0 L345.4 608.8 L339.1 578.0 L343.3 569.4 Z" stroke="#50c8ff" fill="none" /><path d="M354.5 571.9 L350.4 575.6" stroke="#50c8ff" fill="none" /><path d="M361.9 608.3 L356.7 606.4" stroke="#50c8ff" fill="none" /><path d="M333.9 576.1 L339.1 578.0" stroke="#50c8ff" fill="none" /><path d="M341.3 612.5 L345.4 608.8" stroke="#50c8ff" fill="none" /><path d="M350.4 575.6 L342.2 593.4 L356.7 606.4" stroke="#50c8ff" fill="none" /><path d="M339.1 578.0 L353.6 591.0 L345.4 608.8" stroke="#50c8ff" fill="none" /><path d="M351.6 581.4 L344.2 603.0" stroke="#50c8ff" fill="none" /><path d="M340.3 583.7 L353.3 589.7" stroke="#50c8ff" fill="none" /><path d="M319.9 582.3 L322.4 618.0 L317.5 625.1 L311.1 628.4 L304.3 626.0 L298.5 619.7 L296.0 584.0 L300.9 576.9 L307.3 573.6 L314.1 576.0 Z" stroke="#50c8ff" fill="none" /><path d="M314.7 585.6 L316.8 615.5 L310.8 623.6 L303.7 616.4 L301.6 586.5 L307.6 578.4 Z" stroke="#50c8ff" fill="none" /><path d="M319.9 582.3 L314.7 585.6" stroke="#50c8ff" fill="none" /><path d="M322.4 618.0 L316.8 615.5" stroke="#50c8ff" fill="none" /><path d="M296.0 584.0 L301.6 586.5" stroke="#50c8ff" fill="none" /><path d="M298.5 619.7 L303.7 616.4" stroke="#50c8ff" fill="none" /><path d="M314.7 585.6 L302.6 601.5 L316.8 615.5" stroke="#50c8ff" fill="none" /><path d="M301.6 586.5 L315.8 600.5 L303.7 616.4" stroke="#50c8ff" fill="none" /><path d="M315.1 590.9 L303.3 611.1" stroke="#50c8ff" fill="none" /><path d="M301.9 591.9 L315.7 599.2" stroke="#50c8ff" fill="none" /><ellipse cx="401.5" cy="509.5" rx="9.3" ry="9.3" transform="rotate(0 401.5 509.5)" stroke="#50c8ff" fill="none"/><path d="M392.5 508.5 L410.5 508.5" stroke="#50c8ff" fill="none" /><path d="M392.5 510.5 L410.5 510.5" stroke="#50c8ff" fill="none" /><path d="M400.5 500.5 L400.5 518.5" stroke="#50c8ff" fill="none" /><path d="M402.5 500.5 L402.5 518.5" stroke="#50c8ff" fill="none" /><ellipse cx="386.8" cy="604.9" rx="15" ry="9.5" transform="rotate(-15 386.8 604.9)" stroke="#50c8ff" fill="none"/><path d="M373.0 609.0 L401.0 601.0" stroke="#50c8ff" fill="none" /><path d="M388.0 595.5 L391.0 614.0" stroke="#50c8ff" fill="none" /><path d="M457.6 646.4 C457.6 647.3 457.4 648.2 457.1 649.1 C456.7 649.9 456.2 650.8 455.6 651.5 C454.9 652.2 454.1 652.9 453.1 653.4 C452.2 653.9 451.1 654.3 450.0 654.6 C448.9 654.9 447.6 655.1 446.3 655.1 C445.1 655.2 443.7 655.1 442.4 655.0 C441.1 654.8 439.7 654.6 438.5 654.2 C437.2 653.9 435.9 653.5 434.8 653.0 C433.7 652.6 432.6 652.1 431.7 651.6 C430.7 651.0 429.9 650.5 429.2 649.9 C428.6 649.3 428.1 648.7 427.7 648.2 C427.4 647.6 427.2 647.0 427.2 646.4 C427.2 645.8 427.4 645.2 427.7 644.6 C428.1 644.1 428.6 643.5 429.2 642.9 C429.9 642.3 430.7 641.8 431.7 641.2 C432.6 640.7 433.7 640.2 434.8 639.8 C435.9 639.3 437.2 638.9 438.5 638.6 C439.7 638.2 441.1 638.0 442.4 637.8 C443.7 637.7 445.1 637.6 446.3 637.7 C447.6 637.7 448.9 637.9 450.0 638.2 C451.1 638.5 452.2 638.9 453.1 639.4 C454.1 639.9 454.9 640.6 455.6 641.3 C456.2 642.0 456.7 642.9 457.1 643.7 C457.4 644.6 457.6 645.5 457.6 646.4 Z" stroke="#50c8ff" fill="none" /><path d="M427.5 646.0 L457.5 646.0" stroke="#50c8ff" fill="none" /><path d="M427.5 647.5 L457.5 648.0" stroke="#50c8ff" fill="none" /><path d="M446.0 636.2 L446.0 656.6" stroke="#50c8ff" fill="none" /><path d="M448.5 636.5 L448.5 656.4" stroke="#50c8ff" fill="none" /><path d="M427.5 646.5 C429.9 646.2 437.0 644.5 442.0 644.5 C447.0 644.5 454.9 646.2 457.5 646.5" stroke="#50c8ff" fill="none" /><path d="M445.6 680.0 C447.5 677.4 457.3 667.7 464.0 664.0 C470.7 660.3 486.2 655.1 496.0 652.0 C505.8 648.9 531.1 644.1 537.6 640.8 C544.1 637.5 543.0 630.1 544.8 627.2 C546.6 624.3 550.1 619.6 551.2 619.2 C552.3 618.8 552.6 620.4 552.8 624.0 C553.0 627.6 553.7 642.5 552.8 646.4 C551.9 650.3 552.3 650.5 546.4 653.6 C540.5 656.7 519.8 665.8 508.8 669.6 C497.8 673.4 471.9 680.5 464.0 682.4 C456.1 684.3 452.1 683.8 449.6 683.5 C447.1 683.2 443.7 682.6 445.6 680.0 Z" stroke="#50c8ff" fill="none" /><path d="M448.0 680.8 L496.0 664.0 L531.2 652.8 L537.6 640.8 L544.8 636.0 L551.0 620.0" stroke="#50c8ff" fill="none" /><path d="M495.2 652.0 L509.6 669.6" stroke="#50c8ff" fill="none" /><path d="M475.2 734.4 C476.9 733.0 489.0 729.2 496.0 728.0 C503.0 726.8 517.9 726.1 528.0 725.6 C538.1 725.1 564.3 725.5 572.0 724.0 C579.7 722.5 582.6 716.3 585.6 714.4 C588.6 712.5 593.2 709.3 594.4 709.6 C595.6 709.9 594.9 713.7 594.4 716.8 C593.9 719.9 591.8 729.8 590.4 732.8 C589.0 735.8 588.9 737.9 584.0 739.2 C579.1 740.5 563.2 742.0 553.6 742.4 C544.0 742.8 521.4 742.5 512.0 742.0 C502.6 741.5 488.1 739.4 483.2 738.4 C478.3 737.4 473.5 735.8 475.2 734.4 Z" stroke="#50c8ff" fill="none" /><path d="M476.0 734.4 L565.6 734.4 L576.0 726.4 L592.0 710.4" stroke="#50c8ff" fill="none" /><path d="M528.0 725.6 L541.6 741.6" stroke="#50c8ff" fill="none" /><path d="M915.9 696.2 C917.4 695.1 927.4 692.0 933.4 691.1 C939.4 690.2 953.4 689.5 961.2 689.3 C969.0 689.1 986.2 689.9 991.8 689.6 C997.4 689.3 1000.4 688.4 1003.5 686.7 C1006.6 685.0 1013.5 677.4 1015.2 676.5 C1016.9 675.6 1016.8 678.4 1016.6 680.1 C1016.4 681.8 1014.7 687.3 1013.7 689.6 C1012.7 691.9 1010.7 696.2 1009.3 697.7 C1007.9 699.2 1008.6 699.9 1003.5 700.6 C998.4 701.3 979.6 702.9 971.4 703.1 C963.2 703.3 948.8 702.5 942.2 702.0 C935.6 701.5 925.3 699.9 921.8 699.1 C918.3 698.3 914.4 697.3 915.9 696.2 Z" stroke="#50c8ff" fill="none" /><path d="M917.0 696.2 L991.8 696.9 L1003.5 687.4 L1015.0 677.0" stroke="#50c8ff" fill="none" /><path d="M961.2 689.6 L972.1 702.8" stroke="#50c8ff" fill="none" /><path d="M935.6 708.6 C936.6 707.5 943.6 705.0 949.5 704.2 C955.4 703.4 971.7 702.8 980.1 702.5 C988.5 702.2 1006.6 702.5 1012.3 702.0 C1018.0 701.5 1019.5 700.2 1022.5 698.4 C1025.5 696.6 1033.2 689.0 1034.9 688.2 C1036.6 687.4 1035.9 690.5 1035.6 692.6 C1035.3 694.7 1033.7 701.8 1032.7 704.2 C1031.7 706.6 1029.9 709.5 1028.3 710.8 C1026.7 712.1 1025.9 713.1 1021.0 713.7 C1016.1 714.3 1000.0 715.4 991.8 715.6 C983.6 715.8 966.3 715.6 959.7 715.2 C953.1 714.8 945.4 713.2 942.2 712.3 C939.0 711.4 934.6 709.7 935.6 708.6 Z" stroke="#50c8ff" fill="none" /><path d="M937.0 708.6 L1011.5 709.3 L1023.2 699.1 L1034.5 689.0" stroke="#50c8ff" fill="none" /><path d="M980.9 702.8 L991.8 715.2" stroke="#50c8ff" fill="none" /><path d="M910.9 605.3 C911.0 606.6 910.8 608.0 910.4 609.3 C909.9 610.6 909.1 611.9 908.1 613.0 C907.1 614.1 905.8 615.2 904.4 616.1 C902.9 616.9 901.1 617.6 899.3 618.2 C897.5 618.7 895.4 619.1 893.3 619.3 C891.3 619.5 889.0 619.5 886.9 619.4 C884.7 619.3 882.4 619.0 880.3 618.6 C878.2 618.3 876.1 617.8 874.2 617.2 C872.3 616.7 870.4 616.1 868.9 615.4 C867.3 614.8 865.9 614.1 864.7 613.4 C863.6 612.6 862.7 611.9 862.1 611.1 C861.5 610.3 861.1 609.6 861.1 608.7 C861.0 607.9 861.2 607.1 861.7 606.3 C862.2 605.4 863.0 604.5 864.1 603.7 C865.1 602.8 866.4 601.9 867.9 601.0 C869.3 600.2 871.1 599.3 872.9 598.5 C874.7 597.7 876.7 596.9 878.8 596.3 C880.8 595.6 883.0 595.0 885.1 594.6 C887.3 594.2 889.5 593.9 891.6 593.8 C893.6 593.7 895.7 593.8 897.6 594.1 C899.5 594.4 901.3 594.8 902.9 595.5 C904.5 596.1 905.9 597.0 907.1 598.0 C908.2 598.9 909.2 600.1 909.8 601.3 C910.5 602.6 910.8 603.9 910.9 605.3 Z" stroke="#50c8ff" fill="none" /><path d="M922.5 620.0 C922.5 621.6 922.3 623.4 921.7 624.9 C921.2 626.5 920.3 628.1 919.1 629.5 C918.0 630.8 916.5 632.1 914.8 633.2 C913.1 634.2 911.1 635.1 909.0 635.7 C906.9 636.4 904.6 636.8 902.2 637.1 C899.8 637.3 897.3 637.3 894.8 637.2 C892.4 637.0 889.8 636.6 887.4 636.2 C885.0 635.7 882.6 635.1 880.4 634.4 C878.2 633.7 876.2 632.8 874.4 632.0 C872.6 631.1 871.0 630.1 869.7 629.2 C868.4 628.2 867.4 627.2 866.7 626.2 C866.0 625.1 865.6 624.1 865.5 623.0 C865.5 621.9 865.8 620.8 866.3 619.7 C866.9 618.6 867.8 617.5 869.0 616.4 C870.2 615.3 871.7 614.2 873.4 613.1 C875.1 612.1 877.1 611.1 879.1 610.1 C881.2 609.2 883.5 608.3 885.9 607.6 C888.2 606.9 890.7 606.3 893.2 605.8 C895.6 605.4 898.2 605.2 900.5 605.2 C902.9 605.1 905.3 605.3 907.4 605.8 C909.6 606.2 911.7 606.9 913.5 607.7 C915.2 608.6 916.9 609.7 918.2 610.9 C919.5 612.2 920.5 613.7 921.2 615.2 C922.0 616.7 922.4 618.4 922.5 620.0 Z" stroke="#50c8ff" fill="none" /><path d="M889.5 593.5 L890.0 624.0" stroke="#50c8ff" fill="none" /><path d="M892.0 593.5 L892.5 624.0" stroke="#50c8ff" fill="none" /><path d="M902.0 603.0 L902.5 640.0" stroke="#50c8ff" fill="none" /><path d="M905.0 603.0 L905.5 640.0" stroke="#50c8ff" fill="none" /><path d="M860.0 609.5 L906.0 606.5" stroke="#50c8ff" fill="none" /><path d="M860.0 611.0 L905.0 609.0" stroke="#50c8ff" fill="none" /><path d="M865.5 621.5 L922.0 619.0" stroke="#50c8ff" fill="none" /><path d="M865.5 623.5 L921.5 621.5" stroke="#50c8ff" fill="none" /><path d="M860.0 610.0 C864.2 608.8 877.3 604.0 885.0 603.0 C892.7 602.0 902.5 603.8 906.0 604.0" stroke="#50c8ff" fill="none" /><path d="M866.0 622.0 C870.5 621.0 883.8 616.5 893.0 616.0 C902.2 615.5 916.3 618.5 921.0 619.0" stroke="#50c8ff" fill="none" /><path d="M998.7 510.6 L1022.2 505.6 L1027.5 508.8 L1030.5 513.6 L1029.7 519.1 L1026.1 524.2 L1002.6 529.2 L997.3 526.0 L994.3 521.2 L995.1 515.7 Z" stroke="#50c8ff" fill="none" /><path d="M1001.5 514.4 L1021.2 510.2 L1027.3 514.2 L1023.3 520.4 L1003.6 524.6 L997.5 520.6 Z" stroke="#50c8ff" fill="none" /><path d="M998.7 510.6 L1001.5 514.4" stroke="#50c8ff" fill="none" /><path d="M1022.2 505.6 L1021.2 510.2" stroke="#50c8ff" fill="none" /><path d="M1002.6 529.2 L1003.6 524.6" stroke="#50c8ff" fill="none" /><path d="M1026.1 524.2 L1023.3 520.4" stroke="#50c8ff" fill="none" /><path d="M1001.5 514.4 L1013.5 522.5 L1021.2 510.2" stroke="#50c8ff" fill="none" /><path d="M1003.6 524.6 L1011.3 512.3 L1023.3 520.4" stroke="#50c8ff" fill="none" /><path d="M1005.0 513.6 L1019.8 521.2" stroke="#50c8ff" fill="none" /><path d="M1007.2 523.9 L1010.4 512.5" stroke="#50c8ff" fill="none" /><path d="M1028.9 572.9 L1050.1 563.0 L1056.0 565.2 L1060.0 569.4 L1060.6 575.2 L1058.5 581.1 L1037.3 591.0 L1031.4 588.8 L1027.4 584.6 L1026.8 578.8 Z" stroke="#50c8ff" fill="none" /><path d="M1032.5 576.2 L1050.3 567.9 L1057.2 570.7 L1054.9 577.8 L1037.1 586.1 L1030.2 583.3 Z" stroke="#50c8ff" fill="none" /><path d="M1028.9 572.9 L1032.5 576.2" stroke="#50c8ff" fill="none" /><path d="M1050.1 563.0 L1050.3 567.9" stroke="#50c8ff" fill="none" /><path d="M1037.3 591.0 L1037.1 586.1" stroke="#50c8ff" fill="none" /><path d="M1058.5 581.1 L1054.9 577.8" stroke="#50c8ff" fill="none" /><path d="M1032.5 576.2 L1046.0 582.0 L1050.3 567.9" stroke="#50c8ff" fill="none" /><path d="M1037.1 586.1 L1041.4 572.0 L1054.9 577.8" stroke="#50c8ff" fill="none" /><path d="M1035.7 574.7 L1051.7 579.3" stroke="#50c8ff" fill="none" /><path d="M1040.3 584.6 L1040.6 572.4" stroke="#50c8ff" fill="none" /><path d="M1057.3 643.1 L1071.7 624.6 L1077.8 623.8 L1083.1 625.5 L1086.0 630.2 L1086.7 636.3 L1072.3 654.8 L1066.2 655.6 L1060.9 653.9 L1058.0 649.2 Z" stroke="#50c8ff" fill="none" /><path d="M1061.8 644.2 L1073.9 628.8 L1081.1 628.0 L1082.2 635.2 L1070.1 650.6 L1062.9 651.4 Z" stroke="#50c8ff" fill="none" /><path d="M1057.3 643.1 L1061.8 644.2" stroke="#50c8ff" fill="none" /><path d="M1071.7 624.6 L1073.9 628.8" stroke="#50c8ff" fill="none" /><path d="M1072.3 654.8 L1070.1 650.6" stroke="#50c8ff" fill="none" /><path d="M1086.7 636.3 L1082.2 635.2" stroke="#50c8ff" fill="none" /><path d="M1061.8 644.2 L1076.1 642.9 L1073.9 628.8" stroke="#50c8ff" fill="none" /><path d="M1070.1 650.6 L1067.9 636.5 L1082.2 635.2" stroke="#50c8ff" fill="none" /><path d="M1064.0 641.4 L1080.0 638.0" stroke="#50c8ff" fill="none" /><path d="M1072.2 647.9 L1067.3 637.2" stroke="#50c8ff" fill="none" /><path d="M203.6 734.1 L286.9 718.2 L291.0 718.5 L295.0 724.3 L405.5 721.4" stroke="#50c8ff" fill="none" /><path d="M405.5 721.4 C405.7 720.6 405.7 717.4 406.9 715.8 C408.1 714.2 411.1 712.6 413.7 711.0 C416.3 709.4 416.5 707.6 424.0 704.8 C431.5 701.9 448.4 695.6 464.0 692.0 C479.6 688.4 510.6 683.2 528.0 680.8 C545.4 678.4 566.2 677.1 580.0 675.7 C593.8 674.3 606.9 672.3 620.0 671.3 C633.1 670.3 660.5 669.4 667.6 669.1" stroke="#50c8ff" fill="none" /><path d="M203.6 734.1 L309.3 744.2 L313.6 744.2 L308.6 737.4 L419.1 734.1" stroke="#50c8ff" fill="none" /><path d="M419.1 734.1 C420.9 735.1 426.7 739.1 431.3 740.8 C435.9 742.5 440.3 743.3 450.0 745.3 C459.7 747.3 483.1 752.3 496.0 754.4 C508.9 756.5 520.4 757.8 536.0 759.2 C551.6 760.6 579.8 762.7 600.0 763.9 C620.2 765.1 647.2 766.5 670.9 767.2 C694.6 767.9 744.7 768.2 757.7 768.4" stroke="#50c8ff" fill="none" /><path d="M667.6 669.1 L655.2 653.2 L608.5 654.2 L687.3 637.3 L791.7 649.1 L745.7 650.4 L758.8 665.5" stroke="#50c8ff" fill="none" /><path d="M758.8 665.5 C771.0 665.6 814.7 665.5 840.0 666.3 C865.3 667.1 905.7 669.3 927.6 670.7 C949.5 672.1 968.5 673.8 986.0 675.8 C1003.5 677.8 1030.2 681.3 1044.4 683.8 C1058.6 686.3 1073.1 690.3 1080.9 692.6 C1088.7 694.9 1094.3 698.2 1096.7 699.2" stroke="#50c8ff" fill="none" /><path d="M1096.7 699.2 L1207.2 696.5 L1203.0 689.8 L1257.3 694.4 L1313.6 699.6 L1227.0 716.3 L1220.8 709.0 L1111.3 712.8" stroke="#50c8ff" fill="none" /><path d="M1111.3 712.8 C1110.9 713.8 1112.1 716.9 1108.6 719.6 C1105.1 722.3 1100.0 726.7 1088.2 730.5 C1076.4 734.3 1047.3 741.6 1029.8 745.1 C1012.3 748.6 987.9 751.6 971.4 753.9 C954.9 756.1 938.3 758.3 920.0 760.1 C901.7 761.9 860.0 765.0 849.4 765.9" stroke="#50c8ff" fill="none" /><path d="M849.4 765.9 L863.6 781.4 L908.6 779.6 L830.2 796.3 L823.6 796.3 L725.1 785.4 L770.2 782.6 L757.7 768.4" stroke="#50c8ff" fill="none" /><g shape-rendering="auto"><circle cx="779.5" cy="518.5" r="10.3" stroke="#fff" fill="none" stroke-width="1.2"/><circle cx="779.5" cy="518.5" r="10.3" stroke="#e00" fill="none" stroke-width="1.2" stroke-dasharray="4 4"/></g><path d="M759.5 518.5 L772.5 518.5" stroke="#000" fill="none" /><path d="M786.5 518.5 L799.5 518.5" stroke="#000" fill="none" /><path d="M779.5 498.5 L779.5 511.5" stroke="#000" fill="none" /><path d="M779.5 525.5 L779.5 538.5" stroke="#000" fill="none" /><g shape-rendering="auto"><line x1="759" y1="717" x2="767" y2="727" stroke="#3030c0" stroke-width="1"/><circle cx="758.5" cy="717.2" r="15.3" stroke="#cfcfcf" fill="none" stroke-width="1.1"/><line x1="773.5" y1="716.4" x2="824" y2="715.4" stroke="#10e010" stroke-width="1.3"/><path d="M823.2 710 L842 714.6 L823.2 719.4 Z" fill="#14e614"/><line x1="758.5" y1="732.5" x2="759.3" y2="782" stroke="#e01010" stroke-width="1.3"/><path d="M754.6 781.5 L764 781.5 L759.5 800.5 Z" fill="#e60a0a"/><circle cx="766.8" cy="726.7" r="4.4" fill="#2c2cb4"/><circle cx="758.4" cy="717.2" r="3.1" fill="#e08c24" stroke="#3a2a10" stroke-width="0.8"/></g><g shape-rendering="auto"><path d="M1107.5 764.5 L1107.5 780.8 L1111.2 777.3 L1113.8 783.3 L1116 782.3 L1113.5 776.5 L1118.6 776.3 Z" fill="#fff" stroke="#000" stroke-width="1"/></g><g shape-rendering="crispEdges"><rect x="185" y="923" width="3" height="25" fill="#0000f0"/><rect x="185" y="946" width="26" height="3" fill="#00c000"/><rect x="186" y="949" width="4" height="1.5" fill="#e00000"/></g></svg>
<div class="" style="left:161px;top:27px;width:1447px;height:1px;background:#6c6c6c;"></div>
<span class="t" style="left:182px;top:34px;color:#fff;letter-spacing:-0.600px;">User Ortho</span>
<span class="t" style="left:224px;top:954px;color:#fff;letter-spacing:-0.600px;">(1) armFantito cuerpo</span>
<span class="t" style="left:189px;top:912px;color:#2020ff;letter-spacing:0.000px;">z</span>
<span class="t" style="left:213px;top:936px;color:#00c000;letter-spacing:0.000px;">y</span>
<span class="t" style="left:193px;top:940px;color:#d00000;font-size:7px;line-height:8px;">x</span>
</body></html>
